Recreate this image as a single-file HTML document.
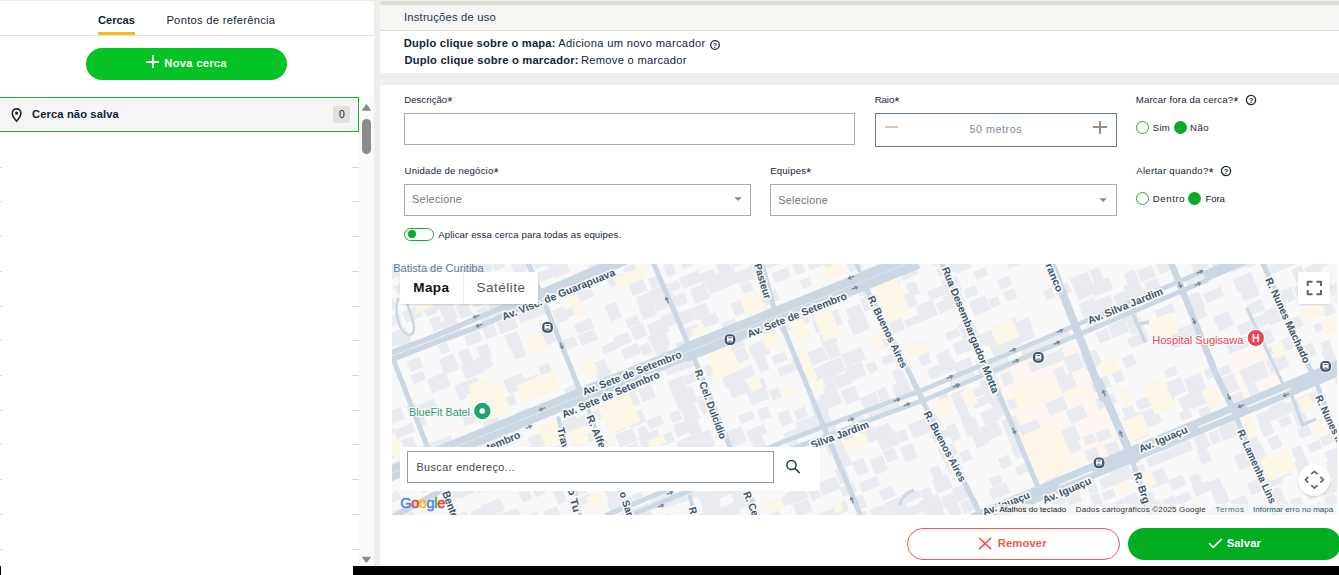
<!DOCTYPE html>
<html><head><meta charset="utf-8"><title>Cercas</title>
<style>
html,body{margin:0;padding:0}
body{width:1339px;height:575px;overflow:hidden;background:#efeeeb;position:relative;font-family:"Liberation Sans",sans-serif}
.abs{position:absolute}
.t{white-space:nowrap}
.box{box-sizing:border-box;border:1px solid #9fadb8;background:#fff}
</style></head><body>
<div class="abs" style="left:0;top:1px;width:374px;height:574px;background:#fff;border-radius:0 3px 0 0"></div>
<span class="abs t" style="left:98.03px;top:14.62px;font-size:11.2px;line-height:11.2px;font-weight:bold;color:#111f33;letter-spacing:-0.091px;">Cercas</span>
<span class="abs t" style="left:166.38px;top:14.62px;font-size:11.2px;line-height:11.2px;color:#13243b;letter-spacing:0.285px;">Pontos de referência</span>
<div class="abs" style="left:98px;top:32px;width:37px;height:3px;background:#fbb917"></div>
<div class="abs" style="left:0;top:35px;width:374px;height:1px;background:#e2e2e2"></div>
<div class="abs" style="left:86px;top:48px;width:201px;height:32px;border-radius:16px;background:#05c325"></div>
<div class="abs" style="left:146px;top:60.5px;width:13px;height:2px;background:#fff"></div>
<div class="abs" style="left:151.5px;top:55px;width:2px;height:13px;background:#fff"></div>
<span class="abs t" style="left:164.33px;top:57.52px;font-size:11.2px;line-height:11.2px;font-weight:bold;color:#fff;letter-spacing:0.275px;">Nova cerca</span>
<div class="abs" style="left:359px;top:96px;width:15px;height:470px;background:#fafafa"></div>
<div class="abs" style="left:0;top:166.70px;width:2px;height:1px;background:#dcd8d2"></div>
<div class="abs" style="left:352px;top:166.70px;width:7px;height:1px;background:#dcd8d2"></div>
<div class="abs" style="left:0;top:201.42px;width:2px;height:1px;background:#dcd8d2"></div>
<div class="abs" style="left:352px;top:201.42px;width:7px;height:1px;background:#dcd8d2"></div>
<div class="abs" style="left:0;top:236.14px;width:2px;height:1px;background:#dcd8d2"></div>
<div class="abs" style="left:352px;top:236.14px;width:7px;height:1px;background:#dcd8d2"></div>
<div class="abs" style="left:0;top:270.86px;width:2px;height:1px;background:#dcd8d2"></div>
<div class="abs" style="left:352px;top:270.86px;width:7px;height:1px;background:#dcd8d2"></div>
<div class="abs" style="left:0;top:305.58px;width:2px;height:1px;background:#dcd8d2"></div>
<div class="abs" style="left:352px;top:305.58px;width:7px;height:1px;background:#dcd8d2"></div>
<div class="abs" style="left:0;top:340.30px;width:2px;height:1px;background:#dcd8d2"></div>
<div class="abs" style="left:352px;top:340.30px;width:7px;height:1px;background:#dcd8d2"></div>
<div class="abs" style="left:0;top:375.02px;width:2px;height:1px;background:#dcd8d2"></div>
<div class="abs" style="left:352px;top:375.02px;width:7px;height:1px;background:#dcd8d2"></div>
<div class="abs" style="left:0;top:409.74px;width:2px;height:1px;background:#dcd8d2"></div>
<div class="abs" style="left:352px;top:409.74px;width:7px;height:1px;background:#dcd8d2"></div>
<div class="abs" style="left:0;top:444.46px;width:2px;height:1px;background:#dcd8d2"></div>
<div class="abs" style="left:352px;top:444.46px;width:7px;height:1px;background:#dcd8d2"></div>
<div class="abs" style="left:0;top:479.18px;width:2px;height:1px;background:#dcd8d2"></div>
<div class="abs" style="left:352px;top:479.18px;width:7px;height:1px;background:#dcd8d2"></div>
<div class="abs" style="left:0;top:513.90px;width:2px;height:1px;background:#dcd8d2"></div>
<div class="abs" style="left:352px;top:513.90px;width:7px;height:1px;background:#dcd8d2"></div>
<div class="abs" style="left:0;top:548.62px;width:2px;height:1px;background:#dcd8d2"></div>
<div class="abs" style="left:352px;top:548.62px;width:7px;height:1px;background:#dcd8d2"></div>
<div class="abs" style="left:-2px;top:97px;width:361px;height:35px;box-sizing:border-box;border:1px solid #14b32b;background:#f5f5f5"></div>
<svg class="abs" style="left:10px;top:106px" width="14" height="18" viewBox="0 0 14 18"><path d="M6.6 2.9c-2.4 0-4.3 1.9-4.3 4.3 0 3.2 4.3 8 4.3 8s4.3-4.8 4.3-8c0-2.4-1.900-4.300-4.300-4.300z" fill="none" stroke="#1a2433" stroke-width="1.6"/><circle cx="6.600" cy="7.100" r="1.6" fill="#1a2433"/></svg>
<span class="abs t" style="left:32.08px;top:109.32px;font-size:11.2px;line-height:11.2px;font-weight:bold;color:#111f33;letter-spacing:0.104px;">Cerca não salva</span>
<div class="abs" style="left:333px;top:106px;width:17px;height:17px;border-radius:2.5px;background:#e1e0db"></div>
<span class="abs t" style="left:338.93px;top:110.10px;font-size:10.4px;line-height:10.4px;color:#13243b;letter-spacing:0.000px;">0</span>
<svg class="abs" style="left:359px;top:100px" width="15" height="14" viewBox="0 0 15 14"><path d="M3.4 10.200 L7.450 4.600 L11.500 10.200 Z" fill="#8a8a8a" stroke="#8a8a8a" stroke-width="1" stroke-linejoin="round"/></svg>
<div class="abs" style="left:362px;top:119px;width:9px;height:35px;border-radius:4.5px;background:#8b8b8b"></div>
<svg class="abs" style="left:359px;top:552px" width="15" height="14" viewBox="0 0 15 14"><path d="M3.4 5.300 L7.45 10.400 L11.500 5.300 Z" fill="#8a8a8a" stroke="#8a8a8a" stroke-width="1" stroke-linejoin="round"/></svg>
<div class="abs" style="left:380px;top:1px;width:970px;height:72px;background:#fff;border-radius:3px 0 0 3px;overflow:hidden"><div style="height:4px;background:#dfddd8"></div><div style="height:25px;background:#f5f5f3"></div><div style="height:1px;background:#dddbd6"></div></div>
<span class="abs t" style="left:404.03px;top:12.42px;font-size:11.2px;line-height:11.2px;color:#1d3352;letter-spacing:0.216px;">Instruções de uso</span>
<span class="abs t" style="left:403.78px;top:37.82px;font-size:11.2px;line-height:11.2px;font-weight:bold;color:#111f33;letter-spacing:0.201px;">Duplo clique sobre o mapa:</span>
<span class="abs t" style="left:558.28px;top:37.82px;font-size:11.2px;line-height:11.2px;color:#13243b;letter-spacing:0.318px;">Adiciona um novo marcador</span>
<span class="abs t" style="left:404.43px;top:54.62px;font-size:11.2px;line-height:11.2px;font-weight:bold;color:#111f33;letter-spacing:0.197px;">Duplo clique sobre o marcador:</span>
<span class="abs t" style="left:580.88px;top:54.62px;font-size:11.2px;line-height:11.2px;color:#13243b;letter-spacing:0.269px;">Remove o marcador</span>
<svg class="abs" style="left:708.00px;top:37.80px" width="14" height="14" viewBox="0 0 14 14"><circle cx="7" cy="7" r="4.30" fill="none" stroke="#1b2a3c" stroke-width="1.3"/><text x="7" y="9.600" font-family='"Liberation Sans", sans-serif' font-size="7.0" font-weight="bold" text-anchor="middle" fill="#1b2a3c">?</text></svg>
<div class="abs" style="left:380px;top:85px;width:970px;height:481px;background:#fff"></div>
<span class="abs t" style="left:404.17px;top:94.87px;font-size:9.6px;line-height:9.6px;color:#13243b;letter-spacing:0.049px;">Descrição<span style="font-size:1.38em;line-height:0;position:relative;top:0.23em">*</span></span>
<div class="abs box" style="left:404px;top:113px;width:451px;height:32px"></div>
<span class="abs t" style="left:874.77px;top:94.97px;font-size:9.6px;line-height:9.6px;color:#13243b;letter-spacing:-0.081px;">Raio<span style="font-size:1.38em;line-height:0;position:relative;top:0.23em">*</span></span>
<div class="abs" style="left:875px;top:113px;width:242px;height:34px;box-sizing:border-box;border:1px solid #647c90;background:#fff"></div>
<div class="abs" style="left:885px;top:126px;width:13.400px;height:2px;background:#cacaca"></div>
<div class="abs" style="left:1093.400px;top:126px;width:13.600px;height:2px;background:#919191"></div>
<div class="abs" style="left:1099.300px;top:120.8px;width:2px;height:13.200px;background:#919191"></div>
<span class="abs t" style="left:969.45px;top:123.56px;font-size:10.8px;line-height:10.8px;color:#7d8897;letter-spacing:0.529px;">50 metros</span>
<span class="abs t" style="left:1135.82px;top:94.77px;font-size:9.6px;line-height:9.6px;color:#13243b;letter-spacing:0.167px;">Marcar fora da cerca?<span style="font-size:1.38em;line-height:0;position:relative;top:0.23em">*</span></span>
<svg class="abs" style="left:1243.60px;top:92.80px" width="14" height="14" viewBox="0 0 14 14"><circle cx="7" cy="7" r="4.60" fill="none" stroke="#1b2a3c" stroke-width="1.3"/><text x="7" y="9.600" font-family='"Liberation Sans", sans-serif' font-size="7.5" font-weight="bold" text-anchor="middle" fill="#1b2a3c">?</text></svg>
<div class="abs" style="left:1135.80px;top:121.30px;width:13px;height:13px;border-radius:50%;box-sizing:border-box;border:1.3px solid #12b02c;background:#fff"></div>
<span class="abs t" style="left:1152.67px;top:122.67px;font-size:9.6px;line-height:9.6px;color:#13243b;letter-spacing:0.340px;">Sim</span>
<div class="abs" style="left:1173.90px;top:121.30px;width:13px;height:13px;border-radius:50%;background:#0bab28"></div>
<span class="abs t" style="left:1190.02px;top:122.67px;font-size:9.6px;line-height:9.6px;color:#13243b;letter-spacing:0.486px;">Não</span>
<span class="abs t" style="left:1136.32px;top:165.77px;font-size:9.6px;line-height:9.6px;color:#13243b;letter-spacing:0.262px;">Alertar quando?<span style="font-size:1.38em;line-height:0;position:relative;top:0.23em">*</span></span>
<svg class="abs" style="left:1218.60px;top:163.90px" width="14" height="14" viewBox="0 0 14 14"><circle cx="7" cy="7" r="4.60" fill="none" stroke="#1b2a3c" stroke-width="1.3"/><text x="7" y="9.600" font-family='"Liberation Sans", sans-serif' font-size="7.5" font-weight="bold" text-anchor="middle" fill="#1b2a3c">?</text></svg>
<div class="abs" style="left:1135.80px;top:191.80px;width:13px;height:13px;border-radius:50%;box-sizing:border-box;border:1.3px solid #12b02c;background:#fff"></div>
<span class="abs t" style="left:1152.82px;top:193.77px;font-size:9.6px;line-height:9.6px;color:#13243b;letter-spacing:0.587px;">Dentro</span>
<div class="abs" style="left:1188.00px;top:191.80px;width:13px;height:13px;border-radius:50%;background:#0bab28"></div>
<span class="abs t" style="left:1205.42px;top:193.77px;font-size:9.6px;line-height:9.6px;color:#13243b;letter-spacing:-0.105px;">Fora</span>
<span class="abs t" style="left:404.62px;top:166.07px;font-size:9.6px;line-height:9.6px;color:#13243b;letter-spacing:0.196px;">Unidade de negócio<span style="font-size:1.38em;line-height:0;position:relative;top:0.23em">*</span></span>
<div class="abs box" style="left:404px;top:184px;width:347px;height:32px"></div>
<span class="abs t" style="left:412.10px;top:193.96px;font-size:10.8px;line-height:10.8px;color:#747474;letter-spacing:0.293px;">Selecione</span>
<svg class="abs" style="left:733px;top:196px" width="10" height="6" viewBox="0 0 10 6"><path d="M1.3 1.2h7.600L5.1 5z" fill="#8a8a8a"/></svg>
<span class="abs t" style="left:770.32px;top:165.77px;font-size:9.6px;line-height:9.6px;color:#13243b;letter-spacing:0.158px;">Equipes<span style="font-size:1.38em;line-height:0;position:relative;top:0.23em">*</span></span>
<div class="abs box" style="left:770px;top:184px;width:347px;height:32px"></div>
<span class="abs t" style="left:778.35px;top:194.86px;font-size:10.8px;line-height:10.8px;color:#747474;letter-spacing:0.247px;">Selecione</span>
<svg class="abs" style="left:1098px;top:197px" width="10" height="6" viewBox="0 0 10 6"><path d="M1.3 1.2h7.600L5.1 5z" fill="#8a8a8a"/></svg>
<div class="abs" style="left:404px;top:228px;width:30px;height:13px;border-radius:7px;box-sizing:border-box;border:1.3px solid #12b02c;background:#fff"></div>
<div class="abs" style="left:408px;top:230.300px;width:8.200px;height:8.200px;border-radius:50%;background:#0bab28"></div>
<span class="abs t" style="left:438.22px;top:229.87px;font-size:9.6px;line-height:9.6px;color:#13243b;letter-spacing:0.118px;">Aplicar essa cerca para todas as equipes.</span>
<div class="abs" style="left:392px;top:264px;width:945px;height:251px;overflow:hidden;background:#f8f8f9"><svg class="abs" style="left:0;top:0" width="945" height="251" viewBox="392 264 945 251" font-family='"Liberation Sans", sans-serif'><rect x="1228.7" y="351.0" width="50.0" height="50.0" fill="#fcf5f1" transform="rotate(-22.4 1253.7 376.0)"/><rect x="1227.0" y="380.0" width="54.0" height="20.0" fill="#fcf5f1" transform="rotate(-22.4 1254.0 390.0)"/><rect x="997.0" y="360.0" width="36.0" height="24.0" fill="#fcf5f1" transform="rotate(-22.4 1015.0 372.0)"/><path d="M995 377 L1080 340 L1126 447 L1039 484 Z" fill="#fcf5f1"/><rect x="378.1" y="517.0" width="17.3" height="10.5" fill="#e9ebf0" transform="rotate(-22.4 386.7 522.2)"/><rect x="379.9" y="462.1" width="11.7" height="13.4" fill="#e9ebf0" transform="rotate(-22.4 385.7 468.8)"/><rect x="385.9" y="492.7" width="14.3" height="9.3" fill="#e9ebf0" transform="rotate(-22.4 393.0 497.3)"/><rect x="392.8" y="507.2" width="20.3" height="11.6" fill="#e9ebf0" transform="rotate(-22.4 402.9 513.0)"/><rect x="384.5" y="429.5" width="13.3" height="14.3" fill="#e9ebf0" transform="rotate(-22.4 391.1 436.7)"/><rect x="387.8" y="444.7" width="9.2" height="14.1" fill="#e9ebf0" transform="rotate(-22.4 392.4 451.8)"/><rect x="391.2" y="460.1" width="18.2" height="15.5" fill="#e9ebf0" transform="rotate(-22.4 400.3 467.9)"/><rect x="388.4" y="409.2" width="15.1" height="12.7" fill="#e9ebf0" transform="rotate(-22.4 396.0 415.5)"/><rect x="396.3" y="426.0" width="18.3" height="9.0" fill="#e9ebf0" transform="rotate(-22.4 405.5 430.5)"/><rect x="403.3" y="437.8" width="12.0" height="14.0" fill="#e9ebf0" transform="rotate(-22.4 409.3 444.8)"/><rect x="405.8" y="451.3" width="17.5" height="14.9" fill="#e9ebf0" transform="rotate(-22.4 414.6 458.8)"/><rect x="412.0" y="468.1" width="20.2" height="13.6" fill="#e9ebf0" transform="rotate(-22.4 422.1 474.9)"/><rect x="421.0" y="483.0" width="12.3" height="8.3" fill="#e9ebf0" transform="rotate(-22.4 427.2 487.1)"/><rect x="380.1" y="334.5" width="17.1" height="13.9" fill="#e9ebf0" transform="rotate(-22.4 388.6 341.5)"/><rect x="386.3" y="348.9" width="14.5" height="11.1" fill="#e9ebf0" transform="rotate(-22.4 393.5 354.4)"/><rect x="407.7" y="403.9" width="10.2" height="10.9" fill="#e9ebf0" transform="rotate(-22.4 412.8 409.4)"/><rect x="416.0" y="417.8" width="9.8" height="8.6" fill="#e9ebf0" transform="rotate(-22.4 421.0 422.1)"/><rect x="421.6" y="443.3" width="18.6" height="16.6" fill="#e9ebf0" transform="rotate(-22.4 430.9 451.6)"/><rect x="431.4" y="459.8" width="14.6" height="16.1" fill="#e9ebf0" transform="rotate(-22.4 438.7 467.8)"/><rect x="445.6" y="486.6" width="10.3" height="13.3" fill="#e9ebf0" transform="rotate(-22.4 450.8 493.2)"/><rect x="449.9" y="514.0" width="19.6" height="14.0" fill="#e9ebf0" transform="rotate(-22.4 459.7 521.0)"/><rect x="379.4" y="286.3" width="11.4" height="9.5" fill="#e9ebf0" transform="rotate(-22.4 385.1 291.0)"/><rect x="384.7" y="300.5" width="10.9" height="10.0" fill="#e9ebf0" transform="rotate(-22.4 390.1 305.5)"/><rect x="386.0" y="315.6" width="15.1" height="9.7" fill="#e9ebf0" transform="rotate(-22.4 393.5 320.4)"/><rect x="394.7" y="329.1" width="14.8" height="16.5" fill="#e9ebf0" transform="rotate(-22.4 402.1 337.4)"/><rect x="400.2" y="344.9" width="10.7" height="9.5" fill="#e9ebf0" transform="rotate(-22.4 405.6 349.7)"/><rect x="408.1" y="358.9" width="13.8" height="11.2" fill="#e9ebf0" transform="rotate(-22.4 415.0 364.5)"/><rect x="411.3" y="372.9" width="13.7" height="9.4" fill="#e9ebf0" transform="rotate(-22.4 418.1 377.6)"/><rect x="419.1" y="401.4" width="17.7" height="11.2" fill="#e9ebf0" transform="rotate(-22.4 428.0 407.0)"/><rect x="438.4" y="437.6" width="15.7" height="14.0" fill="#e9ebf0" transform="rotate(-22.4 446.3 444.6)"/><rect x="455.1" y="482.8" width="18.5" height="13.3" fill="#e9ebf0" transform="rotate(-22.4 464.3 489.4)"/><rect x="471.3" y="509.3" width="13.8" height="9.6" fill="#e9ebf0" transform="rotate(-22.4 478.3 514.2)"/><rect x="379.3" y="253.4" width="19.3" height="16.2" fill="#e9ebf0" transform="rotate(-22.4 388.9 261.5)"/><rect x="384.7" y="264.6" width="13.6" height="14.2" fill="#e9ebf0" transform="rotate(-22.4 391.5 271.7)"/><rect x="394.7" y="283.4" width="15.2" height="8.1" fill="#e9ebf0" transform="rotate(-22.4 402.3 287.4)"/><rect x="403.6" y="308.4" width="17.7" height="11.7" fill="#e9ebf0" transform="rotate(-22.4 412.5 314.3)"/><rect x="428.8" y="375.1" width="19.8" height="15.1" fill="#e9ebf0" transform="rotate(-22.4 438.7 382.6)"/><rect x="461.2" y="446.3" width="16.3" height="9.4" fill="#e9ebf0" transform="rotate(-22.4 469.4 451.1)"/><rect x="474.7" y="475.4" width="10.0" height="16.4" fill="#e9ebf0" transform="rotate(-22.4 479.7 483.6)"/><rect x="483.1" y="501.6" width="19.9" height="13.3" fill="#e9ebf0" transform="rotate(-22.4 493.0 508.2)"/><rect x="489.4" y="514.6" width="18.3" height="8.9" fill="#e9ebf0" transform="rotate(-22.4 498.6 519.0)"/><rect x="409.9" y="275.2" width="13.9" height="9.5" fill="#e9ebf0" transform="rotate(-22.4 416.8 279.9)"/><rect x="415.1" y="288.3" width="12.2" height="11.3" fill="#e9ebf0" transform="rotate(-22.4 421.2 294.0)"/><rect x="423.3" y="299.7" width="10.9" height="16.0" fill="#e9ebf0" transform="rotate(-22.4 428.7 307.7)"/><rect x="431.1" y="316.7" width="10.7" height="13.2" fill="#e9ebf0" transform="rotate(-22.4 436.5 323.3)"/><rect x="439.4" y="343.3" width="9.3" height="9.8" fill="#e9ebf0" transform="rotate(-22.4 444.1 348.3)"/><rect x="441.2" y="356.2" width="15.8" height="16.5" fill="#e9ebf0" transform="rotate(-22.4 449.0 364.5)"/><rect x="456.4" y="382.8" width="15.5" height="15.8" fill="#e9ebf0" transform="rotate(-22.4 464.2 390.7)"/><rect x="462.6" y="412.3" width="20.6" height="10.2" fill="#e9ebf0" transform="rotate(-22.4 472.9 417.4)"/><rect x="475.9" y="441.6" width="11.5" height="12.6" fill="#e9ebf0" transform="rotate(-22.4 481.6 447.9)"/><rect x="483.6" y="452.3" width="17.2" height="16.3" fill="#e9ebf0" transform="rotate(-22.4 492.2 460.5)"/><rect x="499.8" y="511.0" width="20.6" height="10.8" fill="#e9ebf0" transform="rotate(-22.4 510.2 516.4)"/><rect x="414.9" y="250.7" width="17.9" height="14.5" fill="#e9ebf0" transform="rotate(-22.4 423.8 257.9)"/><rect x="422.8" y="268.3" width="14.2" height="14.0" fill="#e9ebf0" transform="rotate(-22.4 429.9 275.3)"/><rect x="432.3" y="278.0" width="11.7" height="11.6" fill="#e9ebf0" transform="rotate(-22.4 438.2 283.8)"/><rect x="430.5" y="297.8" width="20.9" height="11.0" fill="#e9ebf0" transform="rotate(-22.4 440.9 303.3)"/><rect x="441.9" y="306.2" width="13.8" height="14.2" fill="#e9ebf0" transform="rotate(-22.4 448.8 313.3)"/><rect x="443.6" y="319.0" width="15.5" height="16.9" fill="#e9ebf0" transform="rotate(-22.4 451.3 327.5)"/><rect x="460.0" y="349.7" width="11.3" height="14.0" fill="#e9ebf0" transform="rotate(-22.4 465.7 356.7)"/><rect x="462.5" y="361.1" width="20.2" height="15.3" fill="#e9ebf0" transform="rotate(-22.4 472.6 368.8)"/><rect x="469.8" y="378.2" width="10.5" height="14.2" fill="#e9ebf0" transform="rotate(-22.4 475.1 385.3)"/><rect x="481.3" y="401.0" width="17.6" height="15.2" fill="#e9ebf0" transform="rotate(-22.4 490.1 408.7)"/><rect x="484.2" y="416.8" width="16.0" height="14.5" fill="#e9ebf0" transform="rotate(-22.4 492.2 424.1)"/><rect x="492.0" y="433.6" width="17.5" height="10.5" fill="#e9ebf0" transform="rotate(-22.4 500.7 438.8)"/><rect x="498.8" y="458.7" width="17.7" height="15.8" fill="#e9ebf0" transform="rotate(-22.4 507.7 466.6)"/><rect x="520.2" y="490.1" width="10.4" height="11.4" fill="#e9ebf0" transform="rotate(-22.4 525.4 495.8)"/><rect x="521.6" y="515.0" width="19.5" height="17.0" fill="#e9ebf0" transform="rotate(-22.4 531.4 523.4)"/><rect x="437.1" y="249.7" width="14.1" height="9.7" fill="#e9ebf0" transform="rotate(-22.4 444.2 254.6)"/><rect x="444.5" y="278.3" width="14.3" height="11.6" fill="#e9ebf0" transform="rotate(-22.4 451.6 284.1)"/><rect x="449.2" y="287.0" width="13.7" height="11.4" fill="#e9ebf0" transform="rotate(-22.4 456.1 292.7)"/><rect x="457.6" y="303.4" width="13.0" height="14.1" fill="#e9ebf0" transform="rotate(-22.4 464.1 310.5)"/><rect x="465.2" y="333.2" width="16.3" height="10.6" fill="#e9ebf0" transform="rotate(-22.4 473.4 338.5)"/><rect x="478.4" y="345.1" width="11.8" height="13.3" fill="#e9ebf0" transform="rotate(-22.4 484.3 351.8)"/><rect x="478.6" y="355.1" width="12.9" height="13.8" fill="#e9ebf0" transform="rotate(-22.4 485.1 362.0)"/><rect x="489.4" y="385.3" width="12.7" height="11.7" fill="#e9ebf0" transform="rotate(-22.4 495.8 391.2)"/><rect x="495.2" y="397.7" width="20.8" height="10.2" fill="#e9ebf0" transform="rotate(-22.4 505.6 402.7)"/><rect x="511.2" y="425.1" width="9.5" height="15.2" fill="#e9ebf0" transform="rotate(-22.4 515.9 432.6)"/><rect x="518.2" y="456.3" width="20.8" height="8.5" fill="#e9ebf0" transform="rotate(-22.4 528.6 460.5)"/><rect x="522.4" y="468.7" width="18.3" height="15.6" fill="#e9ebf0" transform="rotate(-22.4 531.6 476.4)"/><rect x="533.5" y="485.7" width="10.3" height="10.3" fill="#e9ebf0" transform="rotate(-22.4 538.6 490.9)"/><rect x="544.5" y="508.4" width="14.5" height="9.9" fill="#e9ebf0" transform="rotate(-22.4 551.8 513.3)"/><rect x="460.2" y="265.6" width="18.9" height="12.7" fill="#e9ebf0" transform="rotate(-22.4 469.7 271.9)"/><rect x="466.8" y="280.0" width="19.0" height="14.2" fill="#e9ebf0" transform="rotate(-22.4 476.3 287.1)"/><rect x="471.4" y="294.2" width="19.8" height="11.0" fill="#e9ebf0" transform="rotate(-22.4 481.3 299.8)"/><rect x="478.8" y="307.3" width="9.9" height="13.6" fill="#e9ebf0" transform="rotate(-22.4 483.8 314.1)"/><rect x="482.8" y="321.5" width="12.3" height="16.3" fill="#e9ebf0" transform="rotate(-22.4 489.0 329.6)"/><rect x="505.3" y="375.9" width="20.1" height="15.3" fill="#e9ebf0" transform="rotate(-22.4 515.4 383.5)"/><rect x="516.6" y="409.7" width="15.6" height="13.5" fill="#e9ebf0" transform="rotate(-22.4 524.4 416.5)"/><rect x="528.9" y="434.2" width="18.4" height="12.1" fill="#e9ebf0" transform="rotate(-22.4 538.1 440.3)"/><rect x="535.9" y="444.8" width="17.9" height="15.5" fill="#e9ebf0" transform="rotate(-22.4 544.9 452.5)"/><rect x="543.5" y="462.7" width="11.7" height="10.0" fill="#e9ebf0" transform="rotate(-22.4 549.4 467.6)"/><rect x="555.4" y="489.0" width="9.3" height="14.8" fill="#e9ebf0" transform="rotate(-22.4 560.0 496.4)"/><rect x="475.4" y="249.7" width="10.4" height="10.0" fill="#e9ebf0" transform="rotate(-22.4 480.6 254.7)"/><rect x="473.7" y="258.7" width="17.4" height="15.0" fill="#e9ebf0" transform="rotate(-22.4 482.4 266.2)"/><rect x="486.7" y="290.0" width="13.9" height="16.4" fill="#e9ebf0" transform="rotate(-22.4 493.7 298.2)"/><rect x="489.2" y="301.4" width="20.4" height="12.6" fill="#e9ebf0" transform="rotate(-22.4 499.4 307.7)"/><rect x="497.9" y="319.0" width="19.0" height="12.3" fill="#e9ebf0" transform="rotate(-22.4 507.4 325.1)"/><rect x="506.2" y="332.8" width="13.9" height="13.9" fill="#e9ebf0" transform="rotate(-22.4 513.2 339.7)"/><rect x="512.5" y="345.2" width="11.9" height="13.0" fill="#e9ebf0" transform="rotate(-22.4 518.5 351.7)"/><rect x="519.7" y="377.3" width="20.7" height="8.1" fill="#e9ebf0" transform="rotate(-22.4 530.1 381.4)"/><rect x="541.5" y="426.9" width="17.6" height="14.6" fill="#e9ebf0" transform="rotate(-22.4 550.3 434.2)"/><rect x="551.2" y="444.7" width="16.9" height="8.2" fill="#e9ebf0" transform="rotate(-22.4 559.7 448.8)"/><rect x="557.0" y="458.5" width="13.0" height="9.2" fill="#e9ebf0" transform="rotate(-22.4 563.5 463.1)"/><rect x="569.1" y="480.5" width="15.6" height="15.3" fill="#e9ebf0" transform="rotate(-22.4 576.9 488.2)"/><rect x="571.6" y="496.7" width="20.2" height="8.2" fill="#e9ebf0" transform="rotate(-22.4 581.7 500.9)"/><rect x="492.9" y="259.3" width="11.1" height="10.3" fill="#e9ebf0" transform="rotate(-22.4 498.5 264.5)"/><rect x="506.6" y="283.6" width="10.2" height="13.9" fill="#e9ebf0" transform="rotate(-22.4 511.7 290.5)"/><rect x="508.7" y="299.8" width="17.2" height="8.4" fill="#e9ebf0" transform="rotate(-22.4 517.3 304.0)"/><rect x="518.1" y="309.7" width="14.1" height="11.4" fill="#e9ebf0" transform="rotate(-22.4 525.1 315.4)"/><rect x="540.5" y="364.1" width="11.3" height="16.5" fill="#e9ebf0" transform="rotate(-22.4 546.1 372.4)"/><rect x="560.9" y="418.5" width="17.9" height="14.4" fill="#e9ebf0" transform="rotate(-22.4 569.8 425.7)"/><rect x="586.6" y="477.0" width="12.7" height="11.3" fill="#e9ebf0" transform="rotate(-22.4 592.9 482.6)"/><rect x="512.6" y="260.5" width="14.8" height="11.7" fill="#e9ebf0" transform="rotate(-22.4 520.0 266.4)"/><rect x="527.4" y="292.3" width="16.0" height="10.1" fill="#e9ebf0" transform="rotate(-22.4 535.4 297.4)"/><rect x="529.9" y="303.7" width="16.7" height="12.5" fill="#e9ebf0" transform="rotate(-22.4 538.2 310.0)"/><rect x="540.3" y="321.4" width="11.4" height="11.0" fill="#e9ebf0" transform="rotate(-22.4 546.0 326.9)"/><rect x="539.7" y="329.0" width="14.1" height="15.5" fill="#e9ebf0" transform="rotate(-22.4 546.7 336.7)"/><rect x="565.4" y="385.7" width="13.6" height="10.4" fill="#e9ebf0" transform="rotate(-22.4 572.2 390.9)"/><rect x="576.8" y="414.9" width="14.9" height="11.6" fill="#e9ebf0" transform="rotate(-22.4 584.2 420.7)"/><rect x="583.9" y="432.0" width="16.2" height="9.0" fill="#e9ebf0" transform="rotate(-22.4 591.9 436.5)"/><rect x="589.8" y="446.9" width="18.1" height="8.4" fill="#e9ebf0" transform="rotate(-22.4 598.9 451.1)"/><rect x="606.0" y="486.6" width="19.7" height="10.2" fill="#e9ebf0" transform="rotate(-22.4 615.9 491.7)"/><rect x="608.4" y="497.1" width="18.1" height="13.5" fill="#e9ebf0" transform="rotate(-22.4 617.4 503.8)"/><rect x="617.6" y="512.7" width="15.8" height="16.2" fill="#e9ebf0" transform="rotate(-22.4 625.5 520.8)"/><rect x="532.9" y="258.8" width="12.7" height="8.9" fill="#e9ebf0" transform="rotate(-22.4 539.3 263.3)"/><rect x="534.9" y="270.8" width="18.8" height="9.4" fill="#e9ebf0" transform="rotate(-22.4 544.3 275.5)"/><rect x="543.1" y="288.3" width="10.9" height="8.7" fill="#e9ebf0" transform="rotate(-22.4 548.6 292.6)"/><rect x="554.0" y="308.2" width="12.0" height="14.0" fill="#e9ebf0" transform="rotate(-22.4 559.9 315.2)"/><rect x="563.5" y="338.1" width="13.1" height="10.2" fill="#e9ebf0" transform="rotate(-22.4 570.0 343.2)"/><rect x="587.7" y="393.3" width="13.6" height="10.6" fill="#e9ebf0" transform="rotate(-22.4 594.5 398.6)"/><rect x="594.2" y="407.6" width="12.9" height="10.5" fill="#e9ebf0" transform="rotate(-22.4 600.7 412.9)"/><rect x="607.3" y="453.2" width="20.3" height="12.0" fill="#e9ebf0" transform="rotate(-22.4 617.4 459.2)"/><rect x="618.2" y="463.8" width="12.1" height="8.9" fill="#e9ebf0" transform="rotate(-22.4 624.3 468.3)"/><rect x="622.2" y="473.4" width="14.2" height="16.9" fill="#e9ebf0" transform="rotate(-22.4 629.3 481.8)"/><rect x="624.5" y="494.7" width="19.7" height="11.4" fill="#e9ebf0" transform="rotate(-22.4 634.4 500.4)"/><rect x="631.3" y="506.1" width="20.1" height="13.9" fill="#e9ebf0" transform="rotate(-22.4 641.3 513.1)"/><rect x="638.1" y="518.6" width="14.4" height="12.2" fill="#e9ebf0" transform="rotate(-22.4 645.3 524.7)"/><rect x="544.6" y="251.2" width="14.4" height="14.4" fill="#e9ebf0" transform="rotate(-22.4 551.8 258.5)"/><rect x="552.0" y="263.9" width="16.8" height="11.5" fill="#e9ebf0" transform="rotate(-22.4 560.5 269.7)"/><rect x="555.1" y="280.6" width="17.1" height="12.8" fill="#e9ebf0" transform="rotate(-22.4 563.6 287.0)"/><rect x="564.6" y="306.3" width="19.1" height="8.1" fill="#e9ebf0" transform="rotate(-22.4 574.2 310.3)"/><rect x="575.3" y="320.7" width="17.6" height="10.7" fill="#e9ebf0" transform="rotate(-22.4 584.1 326.0)"/><rect x="579.0" y="332.0" width="17.7" height="11.1" fill="#e9ebf0" transform="rotate(-22.4 587.8 337.6)"/><rect x="594.6" y="360.5" width="13.5" height="16.9" fill="#e9ebf0" transform="rotate(-22.4 601.4 368.9)"/><rect x="597.5" y="371.6" width="15.5" height="11.5" fill="#e9ebf0" transform="rotate(-22.4 605.3 377.3)"/><rect x="606.9" y="403.4" width="15.6" height="14.8" fill="#e9ebf0" transform="rotate(-22.4 614.7 410.8)"/><rect x="613.7" y="418.8" width="11.6" height="12.2" fill="#e9ebf0" transform="rotate(-22.4 619.5 425.0)"/><rect x="617.1" y="430.9" width="18.2" height="13.7" fill="#e9ebf0" transform="rotate(-22.4 626.2 437.7)"/><rect x="628.8" y="444.1" width="11.5" height="12.8" fill="#e9ebf0" transform="rotate(-22.4 634.5 450.5)"/><rect x="632.8" y="456.3" width="12.7" height="11.1" fill="#e9ebf0" transform="rotate(-22.4 639.1 461.8)"/><rect x="636.0" y="474.7" width="15.9" height="9.6" fill="#e9ebf0" transform="rotate(-22.4 644.0 479.5)"/><rect x="651.2" y="497.9" width="10.2" height="10.3" fill="#e9ebf0" transform="rotate(-22.4 656.3 503.1)"/><rect x="650.9" y="516.8" width="20.3" height="10.6" fill="#e9ebf0" transform="rotate(-22.4 661.0 522.1)"/><rect x="573.5" y="271.3" width="15.5" height="8.2" fill="#e9ebf0" transform="rotate(-22.4 581.2 275.4)"/><rect x="575.6" y="288.1" width="17.1" height="11.8" fill="#e9ebf0" transform="rotate(-22.4 584.2 294.1)"/><rect x="602.1" y="343.3" width="16.3" height="8.1" fill="#e9ebf0" transform="rotate(-22.4 610.2 347.4)"/><rect x="615.1" y="371.7" width="12.3" height="8.3" fill="#e9ebf0" transform="rotate(-22.4 621.2 375.8)"/><rect x="617.6" y="393.7" width="20.9" height="14.7" fill="#e9ebf0" transform="rotate(-22.4 628.0 401.1)"/><rect x="627.6" y="412.3" width="17.0" height="13.2" fill="#e9ebf0" transform="rotate(-22.4 636.1 418.9)"/><rect x="638.9" y="426.6" width="9.0" height="11.8" fill="#e9ebf0" transform="rotate(-22.4 643.4 432.5)"/><rect x="640.2" y="432.5" width="20.4" height="15.6" fill="#e9ebf0" transform="rotate(-22.4 650.4 440.3)"/><rect x="653.6" y="466.2" width="14.9" height="9.3" fill="#e9ebf0" transform="rotate(-22.4 661.1 470.9)"/><rect x="656.8" y="476.6" width="19.5" height="11.8" fill="#e9ebf0" transform="rotate(-22.4 666.5 482.5)"/><rect x="661.5" y="492.9" width="16.8" height="13.1" fill="#e9ebf0" transform="rotate(-22.4 669.9 499.5)"/><rect x="590.4" y="263.0" width="14.7" height="16.0" fill="#e9ebf0" transform="rotate(-22.4 597.8 271.0)"/><rect x="607.1" y="303.5" width="12.0" height="16.4" fill="#e9ebf0" transform="rotate(-22.4 613.1 311.7)"/><rect x="614.5" y="334.4" width="15.9" height="10.9" fill="#e9ebf0" transform="rotate(-22.4 622.4 339.8)"/><rect x="622.2" y="346.0" width="17.6" height="11.0" fill="#e9ebf0" transform="rotate(-22.4 631.0 351.5)"/><rect x="639.9" y="386.4" width="13.9" height="13.6" fill="#e9ebf0" transform="rotate(-22.4 646.8 393.2)"/><rect x="647.3" y="417.5" width="15.7" height="9.5" fill="#e9ebf0" transform="rotate(-22.4 655.1 422.3)"/><rect x="658.3" y="434.0" width="15.2" height="10.3" fill="#e9ebf0" transform="rotate(-22.4 665.9 439.1)"/><rect x="664.0" y="447.9" width="10.9" height="10.4" fill="#e9ebf0" transform="rotate(-22.4 669.4 453.1)"/><rect x="671.6" y="457.5" width="11.3" height="9.2" fill="#e9ebf0" transform="rotate(-22.4 677.2 462.1)"/><rect x="671.2" y="472.8" width="18.1" height="11.6" fill="#e9ebf0" transform="rotate(-22.4 680.3 478.6)"/><rect x="677.3" y="488.5" width="19.8" height="11.8" fill="#e9ebf0" transform="rotate(-22.4 687.2 494.4)"/><rect x="692.7" y="513.7" width="17.2" height="11.4" fill="#e9ebf0" transform="rotate(-22.4 701.3 519.4)"/><rect x="608.1" y="276.1" width="17.3" height="9.0" fill="#e9ebf0" transform="rotate(-22.4 616.8 280.6)"/><rect x="626.3" y="316.8" width="12.8" height="9.2" fill="#e9ebf0" transform="rotate(-22.4 632.7 321.4)"/><rect x="631.8" y="325.3" width="13.6" height="13.0" fill="#e9ebf0" transform="rotate(-22.4 638.6 331.8)"/><rect x="640.8" y="343.9" width="10.1" height="11.0" fill="#e9ebf0" transform="rotate(-22.4 645.9 349.4)"/><rect x="670.8" y="411.4" width="10.4" height="10.3" fill="#e9ebf0" transform="rotate(-22.4 676.0 416.6)"/><rect x="674.7" y="422.4" width="13.9" height="12.8" fill="#e9ebf0" transform="rotate(-22.4 681.7 428.8)"/><rect x="678.3" y="437.8" width="18.6" height="15.9" fill="#e9ebf0" transform="rotate(-22.4 687.5 445.7)"/><rect x="681.4" y="455.0" width="17.3" height="11.3" fill="#e9ebf0" transform="rotate(-22.4 690.1 460.7)"/><rect x="688.7" y="467.3" width="14.5" height="15.3" fill="#e9ebf0" transform="rotate(-22.4 696.0 474.9)"/><rect x="692.9" y="478.7" width="17.9" height="15.9" fill="#e9ebf0" transform="rotate(-22.4 701.9 486.6)"/><rect x="699.8" y="491.6" width="19.3" height="14.8" fill="#e9ebf0" transform="rotate(-22.4 709.4 499.1)"/><rect x="703.2" y="505.4" width="19.6" height="15.2" fill="#e9ebf0" transform="rotate(-22.4 713.0 513.0)"/><rect x="624.1" y="265.4" width="12.3" height="8.5" fill="#e9ebf0" transform="rotate(-22.4 630.2 269.7)"/><rect x="630.0" y="280.3" width="15.7" height="13.4" fill="#e9ebf0" transform="rotate(-22.4 637.8 287.0)"/><rect x="637.2" y="293.8" width="17.6" height="12.2" fill="#e9ebf0" transform="rotate(-22.4 646.0 299.9)"/><rect x="640.5" y="304.4" width="14.6" height="13.5" fill="#e9ebf0" transform="rotate(-22.4 647.7 311.2)"/><rect x="648.9" y="320.7" width="19.2" height="15.3" fill="#e9ebf0" transform="rotate(-22.4 658.6 328.4)"/><rect x="650.2" y="332.0" width="17.9" height="16.9" fill="#e9ebf0" transform="rotate(-22.4 659.1 340.5)"/><rect x="657.5" y="348.5" width="13.2" height="13.4" fill="#e9ebf0" transform="rotate(-22.4 664.1 355.2)"/><rect x="664.4" y="361.6" width="19.9" height="11.0" fill="#e9ebf0" transform="rotate(-22.4 674.4 367.1)"/><rect x="669.8" y="378.2" width="16.1" height="15.4" fill="#e9ebf0" transform="rotate(-22.4 677.8 385.9)"/><rect x="674.7" y="389.5" width="20.8" height="16.4" fill="#e9ebf0" transform="rotate(-22.4 685.1 397.7)"/><rect x="682.7" y="405.1" width="15.4" height="16.6" fill="#e9ebf0" transform="rotate(-22.4 690.4 413.4)"/><rect x="688.0" y="421.3" width="12.2" height="13.0" fill="#e9ebf0" transform="rotate(-22.4 694.1 427.8)"/><rect x="692.7" y="432.4" width="20.4" height="15.9" fill="#e9ebf0" transform="rotate(-22.4 702.9 440.3)"/><rect x="700.8" y="440.3" width="14.0" height="16.5" fill="#e9ebf0" transform="rotate(-22.4 707.8 448.5)"/><rect x="706.4" y="459.4" width="11.8" height="14.4" fill="#e9ebf0" transform="rotate(-22.4 712.3 466.6)"/><rect x="717.0" y="484.7" width="17.4" height="11.1" fill="#e9ebf0" transform="rotate(-22.4 725.6 490.2)"/><rect x="719.5" y="505.1" width="18.6" height="12.1" fill="#e9ebf0" transform="rotate(-22.4 728.8 511.1)"/><rect x="649.6" y="276.7" width="9.8" height="10.8" fill="#e9ebf0" transform="rotate(-22.4 654.5 282.1)"/><rect x="651.6" y="286.1" width="20.2" height="14.0" fill="#e9ebf0" transform="rotate(-22.4 661.6 293.1)"/><rect x="655.2" y="301.1" width="14.2" height="8.2" fill="#e9ebf0" transform="rotate(-22.4 662.3 305.2)"/><rect x="661.8" y="312.8" width="19.3" height="11.7" fill="#e9ebf0" transform="rotate(-22.4 671.5 318.7)"/><rect x="677.5" y="340.8" width="12.2" height="15.0" fill="#e9ebf0" transform="rotate(-22.4 683.6 348.4)"/><rect x="677.0" y="355.6" width="19.6" height="12.5" fill="#e9ebf0" transform="rotate(-22.4 686.8 361.8)"/><rect x="684.1" y="372.7" width="18.7" height="9.0" fill="#e9ebf0" transform="rotate(-22.4 693.4 377.2)"/><rect x="698.5" y="394.9" width="14.3" height="16.9" fill="#e9ebf0" transform="rotate(-22.4 705.7 403.4)"/><rect x="723.9" y="469.3" width="17.1" height="13.7" fill="#e9ebf0" transform="rotate(-22.4 732.5 476.1)"/><rect x="732.0" y="485.9" width="15.4" height="8.2" fill="#e9ebf0" transform="rotate(-22.4 739.7 489.9)"/><rect x="733.5" y="490.8" width="20.7" height="16.1" fill="#e9ebf0" transform="rotate(-22.4 743.9 498.9)"/><rect x="662.3" y="254.7" width="10.5" height="9.0" fill="#e9ebf0" transform="rotate(-22.4 667.6 259.2)"/><rect x="665.4" y="263.9" width="9.2" height="12.4" fill="#e9ebf0" transform="rotate(-22.4 670.0 270.2)"/><rect x="668.4" y="282.3" width="11.5" height="8.0" fill="#e9ebf0" transform="rotate(-22.4 674.1 286.3)"/><rect x="672.6" y="294.3" width="14.0" height="11.2" fill="#e9ebf0" transform="rotate(-22.4 679.6 299.9)"/><rect x="676.3" y="310.9" width="17.9" height="12.4" fill="#e9ebf0" transform="rotate(-22.4 685.2 317.2)"/><rect x="685.0" y="326.0" width="14.5" height="9.8" fill="#e9ebf0" transform="rotate(-22.4 692.3 330.9)"/><rect x="704.9" y="364.6" width="10.4" height="10.9" fill="#e9ebf0" transform="rotate(-22.4 710.1 370.0)"/><rect x="725.6" y="429.4" width="19.1" height="15.8" fill="#e9ebf0" transform="rotate(-22.4 735.1 437.3)"/><rect x="744.2" y="459.4" width="13.2" height="9.8" fill="#e9ebf0" transform="rotate(-22.4 750.8 464.3)"/><rect x="766.8" y="512.8" width="15.9" height="14.1" fill="#e9ebf0" transform="rotate(-22.4 774.7 519.9)"/><rect x="680.9" y="257.7" width="10.6" height="9.9" fill="#e9ebf0" transform="rotate(-22.4 686.2 262.7)"/><rect x="680.3" y="273.6" width="20.6" height="12.0" fill="#e9ebf0" transform="rotate(-22.4 690.6 279.6)"/><rect x="692.0" y="285.8" width="16.1" height="15.5" fill="#e9ebf0" transform="rotate(-22.4 700.0 293.6)"/><rect x="693.6" y="304.7" width="15.4" height="13.2" fill="#e9ebf0" transform="rotate(-22.4 701.3 311.3)"/><rect x="701.3" y="315.0" width="16.7" height="10.6" fill="#e9ebf0" transform="rotate(-22.4 709.6 320.3)"/><rect x="713.8" y="346.8" width="11.7" height="10.4" fill="#e9ebf0" transform="rotate(-22.4 719.7 352.0)"/><rect x="721.7" y="352.4" width="11.5" height="15.2" fill="#e9ebf0" transform="rotate(-22.4 727.5 359.9)"/><rect x="722.8" y="371.2" width="17.6" height="15.1" fill="#e9ebf0" transform="rotate(-22.4 731.6 378.8)"/><rect x="729.6" y="383.1" width="18.8" height="12.2" fill="#e9ebf0" transform="rotate(-22.4 739.0 389.2)"/><rect x="739.0" y="413.0" width="15.0" height="8.4" fill="#e9ebf0" transform="rotate(-22.4 746.4 417.3)"/><rect x="746.9" y="427.4" width="19.4" height="9.4" fill="#e9ebf0" transform="rotate(-22.4 756.5 432.1)"/><rect x="752.9" y="436.1" width="12.2" height="16.3" fill="#e9ebf0" transform="rotate(-22.4 758.9 444.3)"/><rect x="762.7" y="469.2" width="20.4" height="13.4" fill="#e9ebf0" transform="rotate(-22.4 772.9 475.9)"/><rect x="772.5" y="480.7" width="11.9" height="9.2" fill="#e9ebf0" transform="rotate(-22.4 778.5 485.3)"/><rect x="775.9" y="496.8" width="14.6" height="9.3" fill="#e9ebf0" transform="rotate(-22.4 783.2 501.4)"/><rect x="699.4" y="271.3" width="16.0" height="10.1" fill="#e9ebf0" transform="rotate(-22.4 707.4 276.4)"/><rect x="707.4" y="279.2" width="14.2" height="13.2" fill="#e9ebf0" transform="rotate(-22.4 714.5 285.8)"/><rect x="722.7" y="320.6" width="14.7" height="14.4" fill="#e9ebf0" transform="rotate(-22.4 730.1 327.8)"/><rect x="727.2" y="334.1" width="16.2" height="15.4" fill="#e9ebf0" transform="rotate(-22.4 735.3 341.8)"/><rect x="735.6" y="348.9" width="12.1" height="12.6" fill="#e9ebf0" transform="rotate(-22.4 741.7 355.2)"/><rect x="738.7" y="367.1" width="15.0" height="11.2" fill="#e9ebf0" transform="rotate(-22.4 746.2 372.7)"/><rect x="745.5" y="380.8" width="20.3" height="10.2" fill="#e9ebf0" transform="rotate(-22.4 755.7 385.9)"/><rect x="748.6" y="388.3" width="19.3" height="14.1" fill="#e9ebf0" transform="rotate(-22.4 758.2 395.4)"/><rect x="758.9" y="407.7" width="10.9" height="11.3" fill="#e9ebf0" transform="rotate(-22.4 764.4 413.3)"/><rect x="772.6" y="449.0" width="12.1" height="8.3" fill="#e9ebf0" transform="rotate(-22.4 778.6 453.1)"/><rect x="785.3" y="474.7" width="20.0" height="12.2" fill="#e9ebf0" transform="rotate(-22.4 795.4 480.8)"/><rect x="787.2" y="489.5" width="20.2" height="12.4" fill="#e9ebf0" transform="rotate(-22.4 797.3 495.7)"/><rect x="794.6" y="501.6" width="16.5" height="12.6" fill="#e9ebf0" transform="rotate(-22.4 802.8 507.9)"/><rect x="808.0" y="519.5" width="10.0" height="8.3" fill="#e9ebf0" transform="rotate(-22.4 813.0 523.6)"/><rect x="717.2" y="260.0" width="13.6" height="13.0" fill="#e9ebf0" transform="rotate(-22.4 724.0 266.5)"/><rect x="716.2" y="270.6" width="20.9" height="16.2" fill="#e9ebf0" transform="rotate(-22.4 726.7 278.7)"/><rect x="732.2" y="299.7" width="18.7" height="13.9" fill="#e9ebf0" transform="rotate(-22.4 741.5 306.6)"/><rect x="750.1" y="341.9" width="18.1" height="15.6" fill="#e9ebf0" transform="rotate(-22.4 759.1 349.7)"/><rect x="757.1" y="355.6" width="9.9" height="15.9" fill="#e9ebf0" transform="rotate(-22.4 762.1 363.5)"/><rect x="770.5" y="388.2" width="9.8" height="11.2" fill="#e9ebf0" transform="rotate(-22.4 775.4 393.8)"/><rect x="779.3" y="411.2" width="11.7" height="14.0" fill="#e9ebf0" transform="rotate(-22.4 785.2 418.2)"/><rect x="784.5" y="429.4" width="20.6" height="10.5" fill="#e9ebf0" transform="rotate(-22.4 794.8 434.7)"/><rect x="789.7" y="441.2" width="9.9" height="12.5" fill="#e9ebf0" transform="rotate(-22.4 794.6 447.4)"/><rect x="809.2" y="484.0" width="9.6" height="15.6" fill="#e9ebf0" transform="rotate(-22.4 814.1 491.8)"/><rect x="821.7" y="510.5" width="13.7" height="11.8" fill="#e9ebf0" transform="rotate(-22.4 828.6 516.4)"/><rect x="730.6" y="254.3" width="17.5" height="10.6" fill="#e9ebf0" transform="rotate(-22.4 739.3 259.7)"/><rect x="736.7" y="269.6" width="16.8" height="11.9" fill="#e9ebf0" transform="rotate(-22.4 745.1 275.5)"/><rect x="741.4" y="282.4" width="11.2" height="9.7" fill="#e9ebf0" transform="rotate(-22.4 747.0 287.2)"/><rect x="757.1" y="308.8" width="11.9" height="9.6" fill="#e9ebf0" transform="rotate(-22.4 763.1 313.6)"/><rect x="762.3" y="322.2" width="12.0" height="15.3" fill="#e9ebf0" transform="rotate(-22.4 768.3 329.9)"/><rect x="772.4" y="353.8" width="14.3" height="8.8" fill="#e9ebf0" transform="rotate(-22.4 779.5 358.2)"/><rect x="778.2" y="365.4" width="16.7" height="8.8" fill="#e9ebf0" transform="rotate(-22.4 786.5 369.8)"/><rect x="794.8" y="408.5" width="12.0" height="9.9" fill="#e9ebf0" transform="rotate(-22.4 800.8 413.4)"/><rect x="798.0" y="418.2" width="20.5" height="16.7" fill="#e9ebf0" transform="rotate(-22.4 808.2 426.6)"/><rect x="819.3" y="479.1" width="19.5" height="13.5" fill="#e9ebf0" transform="rotate(-22.4 829.1 485.9)"/><rect x="832.4" y="503.1" width="15.6" height="10.5" fill="#e9ebf0" transform="rotate(-22.4 840.2 508.4)"/><rect x="839.6" y="518.3" width="19.5" height="10.6" fill="#e9ebf0" transform="rotate(-22.4 849.4 523.6)"/><rect x="749.3" y="261.4" width="19.1" height="8.8" fill="#e9ebf0" transform="rotate(-22.4 758.9 265.8)"/><rect x="761.4" y="292.1" width="17.1" height="11.7" fill="#e9ebf0" transform="rotate(-22.4 770.0 297.9)"/><rect x="770.9" y="305.5" width="15.1" height="12.9" fill="#e9ebf0" transform="rotate(-22.4 778.5 311.9)"/><rect x="777.6" y="317.5" width="10.3" height="14.2" fill="#e9ebf0" transform="rotate(-22.4 782.8 324.7)"/><rect x="793.2" y="356.7" width="10.1" height="12.9" fill="#e9ebf0" transform="rotate(-22.4 798.3 363.1)"/><rect x="811.9" y="399.9" width="14.8" height="15.7" fill="#e9ebf0" transform="rotate(-22.4 819.3 407.7)"/><rect x="813.1" y="414.9" width="17.7" height="12.0" fill="#e9ebf0" transform="rotate(-22.4 822.0 420.9)"/><rect x="823.4" y="427.9" width="14.0" height="10.0" fill="#e9ebf0" transform="rotate(-22.4 830.4 432.9)"/><rect x="826.7" y="440.7" width="16.9" height="12.4" fill="#e9ebf0" transform="rotate(-22.4 835.1 447.0)"/><rect x="834.3" y="451.5" width="15.5" height="16.6" fill="#e9ebf0" transform="rotate(-22.4 842.1 459.8)"/><rect x="837.2" y="467.5" width="10.8" height="15.7" fill="#e9ebf0" transform="rotate(-22.4 842.7 475.3)"/><rect x="840.8" y="484.8" width="15.1" height="9.6" fill="#e9ebf0" transform="rotate(-22.4 848.4 489.6)"/><rect x="853.4" y="495.8" width="11.8" height="13.4" fill="#e9ebf0" transform="rotate(-22.4 859.3 502.4)"/><rect x="858.3" y="511.9" width="10.1" height="12.9" fill="#e9ebf0" transform="rotate(-22.4 863.3 518.3)"/><rect x="764.8" y="251.8" width="20.2" height="13.7" fill="#e9ebf0" transform="rotate(-22.4 774.9 258.6)"/><rect x="773.0" y="269.9" width="17.0" height="10.6" fill="#e9ebf0" transform="rotate(-22.4 781.5 275.2)"/><rect x="794.9" y="311.1" width="12.7" height="14.4" fill="#e9ebf0" transform="rotate(-22.4 801.2 318.3)"/><rect x="807.7" y="349.3" width="18.6" height="14.2" fill="#e9ebf0" transform="rotate(-22.4 817.0 356.4)"/><rect x="813.9" y="364.8" width="20.9" height="16.6" fill="#e9ebf0" transform="rotate(-22.4 824.4 373.2)"/><rect x="822.0" y="380.4" width="13.8" height="12.5" fill="#e9ebf0" transform="rotate(-22.4 828.9 386.7)"/><rect x="821.2" y="391.6" width="19.1" height="15.6" fill="#e9ebf0" transform="rotate(-22.4 830.8 399.4)"/><rect x="846.3" y="436.5" width="9.1" height="12.0" fill="#e9ebf0" transform="rotate(-22.4 850.8 442.5)"/><rect x="854.3" y="459.5" width="12.1" height="15.4" fill="#e9ebf0" transform="rotate(-22.4 860.3 467.2)"/><rect x="859.8" y="479.1" width="19.4" height="10.3" fill="#e9ebf0" transform="rotate(-22.4 869.5 484.3)"/><rect x="871.6" y="506.6" width="15.5" height="14.1" fill="#e9ebf0" transform="rotate(-22.4 879.4 513.7)"/><rect x="875.9" y="517.1" width="10.3" height="15.4" fill="#e9ebf0" transform="rotate(-22.4 881.0 524.8)"/><rect x="793.2" y="257.5" width="9.6" height="16.6" fill="#e9ebf0" transform="rotate(-22.4 798.0 265.8)"/><rect x="801.0" y="278.7" width="9.6" height="8.8" fill="#e9ebf0" transform="rotate(-22.4 805.8 283.2)"/><rect x="809.7" y="304.9" width="11.8" height="12.3" fill="#e9ebf0" transform="rotate(-22.4 815.6 311.0)"/><rect x="813.7" y="317.4" width="17.3" height="13.6" fill="#e9ebf0" transform="rotate(-22.4 822.4 324.2)"/><rect x="820.9" y="332.2" width="15.2" height="13.3" fill="#e9ebf0" transform="rotate(-22.4 828.5 338.8)"/><rect x="826.8" y="345.3" width="12.3" height="12.6" fill="#e9ebf0" transform="rotate(-22.4 832.9 351.6)"/><rect x="824.7" y="359.9" width="19.4" height="14.5" fill="#e9ebf0" transform="rotate(-22.4 834.5 367.2)"/><rect x="835.1" y="374.2" width="16.0" height="12.1" fill="#e9ebf0" transform="rotate(-22.4 843.1 380.2)"/><rect x="842.9" y="387.8" width="15.2" height="15.1" fill="#e9ebf0" transform="rotate(-22.4 850.5 395.3)"/><rect x="851.6" y="414.7" width="13.2" height="12.4" fill="#e9ebf0" transform="rotate(-22.4 858.3 420.9)"/><rect x="862.3" y="428.3" width="13.5" height="14.3" fill="#e9ebf0" transform="rotate(-22.4 869.0 435.4)"/><rect x="872.2" y="457.3" width="13.5" height="15.9" fill="#e9ebf0" transform="rotate(-22.4 878.9 465.2)"/><rect x="880.3" y="487.7" width="14.0" height="11.2" fill="#e9ebf0" transform="rotate(-22.4 887.3 493.2)"/><rect x="886.5" y="498.8" width="20.0" height="14.9" fill="#e9ebf0" transform="rotate(-22.4 896.5 506.3)"/><rect x="892.5" y="510.5" width="11.4" height="11.1" fill="#e9ebf0" transform="rotate(-22.4 898.2 516.0)"/><rect x="808.1" y="258.6" width="13.6" height="9.5" fill="#e9ebf0" transform="rotate(-22.4 814.9 263.4)"/><rect x="826.8" y="311.1" width="13.9" height="16.0" fill="#e9ebf0" transform="rotate(-22.4 833.8 319.1)"/><rect x="843.0" y="350.2" width="21.0" height="13.2" fill="#e9ebf0" transform="rotate(-22.4 853.5 356.8)"/><rect x="847.2" y="364.5" width="17.5" height="14.5" fill="#e9ebf0" transform="rotate(-22.4 855.9 371.7)"/><rect x="862.2" y="394.5" width="16.7" height="16.2" fill="#e9ebf0" transform="rotate(-22.4 870.6 402.6)"/><rect x="867.9" y="405.2" width="16.5" height="12.8" fill="#e9ebf0" transform="rotate(-22.4 876.2 411.6)"/><rect x="871.7" y="425.5" width="19.4" height="8.7" fill="#e9ebf0" transform="rotate(-22.4 881.4 429.9)"/><rect x="878.1" y="431.6" width="19.7" height="16.4" fill="#e9ebf0" transform="rotate(-22.4 887.9 439.8)"/><rect x="884.7" y="449.3" width="11.6" height="11.8" fill="#e9ebf0" transform="rotate(-22.4 890.5 455.2)"/><rect x="903.9" y="492.7" width="16.9" height="8.0" fill="#e9ebf0" transform="rotate(-22.4 912.4 496.7)"/><rect x="902.9" y="506.5" width="18.7" height="9.0" fill="#e9ebf0" transform="rotate(-22.4 912.3 511.0)"/><rect x="820.9" y="249.1" width="12.7" height="15.5" fill="#e9ebf0" transform="rotate(-22.4 827.3 256.8)"/><rect x="827.7" y="262.1" width="14.0" height="12.9" fill="#e9ebf0" transform="rotate(-22.4 834.7 268.5)"/><rect x="847.4" y="306.3" width="15.3" height="13.1" fill="#e9ebf0" transform="rotate(-22.4 855.0 312.8)"/><rect x="849.7" y="316.3" width="18.1" height="16.3" fill="#e9ebf0" transform="rotate(-22.4 858.7 324.5)"/><rect x="867.3" y="362.6" width="9.7" height="9.6" fill="#e9ebf0" transform="rotate(-22.4 872.2 367.4)"/><rect x="878.7" y="388.3" width="9.7" height="13.5" fill="#e9ebf0" transform="rotate(-22.4 883.6 395.0)"/><rect x="880.2" y="405.8" width="20.1" height="8.1" fill="#e9ebf0" transform="rotate(-22.4 890.2 409.8)"/><rect x="898.1" y="430.2" width="9.1" height="11.2" fill="#e9ebf0" transform="rotate(-22.4 902.6 435.8)"/><rect x="902.3" y="445.3" width="13.1" height="15.6" fill="#e9ebf0" transform="rotate(-22.4 908.8 453.1)"/><rect x="921.3" y="488.5" width="10.4" height="10.0" fill="#e9ebf0" transform="rotate(-22.4 926.5 493.5)"/><rect x="921.1" y="497.1" width="20.5" height="16.4" fill="#e9ebf0" transform="rotate(-22.4 931.3 505.3)"/><rect x="927.3" y="510.9" width="18.0" height="12.7" fill="#e9ebf0" transform="rotate(-22.4 936.3 517.2)"/><rect x="846.8" y="255.9" width="12.9" height="14.8" fill="#e9ebf0" transform="rotate(-22.4 853.3 263.4)"/><rect x="857.4" y="284.0" width="12.3" height="11.4" fill="#e9ebf0" transform="rotate(-22.4 863.6 289.7)"/><rect x="862.0" y="296.8" width="9.7" height="13.7" fill="#e9ebf0" transform="rotate(-22.4 866.9 303.7)"/><rect x="879.9" y="338.9" width="10.6" height="8.2" fill="#e9ebf0" transform="rotate(-22.4 885.2 343.0)"/><rect x="881.9" y="354.8" width="15.3" height="8.0" fill="#e9ebf0" transform="rotate(-22.4 889.5 358.8)"/><rect x="894.3" y="368.3" width="9.8" height="13.9" fill="#e9ebf0" transform="rotate(-22.4 899.2 375.3)"/><rect x="894.1" y="381.6" width="16.7" height="16.5" fill="#e9ebf0" transform="rotate(-22.4 902.5 389.9)"/><rect x="910.0" y="420.4" width="20.0" height="15.1" fill="#e9ebf0" transform="rotate(-22.4 920.0 427.9)"/><rect x="931.7" y="466.4" width="9.7" height="12.9" fill="#e9ebf0" transform="rotate(-22.4 936.5 472.8)"/><rect x="934.2" y="476.5" width="16.3" height="14.6" fill="#e9ebf0" transform="rotate(-22.4 942.3 483.8)"/><rect x="942.4" y="494.5" width="13.4" height="12.7" fill="#e9ebf0" transform="rotate(-22.4 949.1 500.8)"/><rect x="948.1" y="505.1" width="12.4" height="11.5" fill="#e9ebf0" transform="rotate(-22.4 954.3 510.8)"/><rect x="860.9" y="267.1" width="20.6" height="11.3" fill="#e9ebf0" transform="rotate(-22.4 871.2 272.8)"/><rect x="872.6" y="277.6" width="14.3" height="10.8" fill="#e9ebf0" transform="rotate(-22.4 879.8 283.0)"/><rect x="889.0" y="317.2" width="14.1" height="15.2" fill="#e9ebf0" transform="rotate(-22.4 896.1 324.8)"/><rect x="924.9" y="415.1" width="15.3" height="11.2" fill="#e9ebf0" transform="rotate(-22.4 932.6 420.7)"/><rect x="932.3" y="430.8" width="20.2" height="8.1" fill="#e9ebf0" transform="rotate(-22.4 942.3 434.9)"/><rect x="939.2" y="445.1" width="17.1" height="12.4" fill="#e9ebf0" transform="rotate(-22.4 947.7 451.3)"/><rect x="946.6" y="459.0" width="14.7" height="13.1" fill="#e9ebf0" transform="rotate(-22.4 953.9 465.5)"/><rect x="953.8" y="485.2" width="17.8" height="14.6" fill="#e9ebf0" transform="rotate(-22.4 962.7 492.5)"/><rect x="961.3" y="499.4" width="17.1" height="11.4" fill="#e9ebf0" transform="rotate(-22.4 969.9 505.1)"/><rect x="879.2" y="255.5" width="17.9" height="14.7" fill="#e9ebf0" transform="rotate(-22.4 888.2 262.9)"/><rect x="883.3" y="274.4" width="15.6" height="13.2" fill="#e9ebf0" transform="rotate(-22.4 891.1 281.0)"/><rect x="895.1" y="295.4" width="20.6" height="13.5" fill="#e9ebf0" transform="rotate(-22.4 905.5 302.1)"/><rect x="905.1" y="316.9" width="16.2" height="8.1" fill="#e9ebf0" transform="rotate(-22.4 913.2 320.9)"/><rect x="917.3" y="341.3" width="10.6" height="15.6" fill="#e9ebf0" transform="rotate(-22.4 922.6 349.1)"/><rect x="919.6" y="354.1" width="10.3" height="10.4" fill="#e9ebf0" transform="rotate(-22.4 924.8 359.3)"/><rect x="928.4" y="366.6" width="12.5" height="11.4" fill="#e9ebf0" transform="rotate(-22.4 934.6 372.3)"/><rect x="939.7" y="393.9" width="9.5" height="13.2" fill="#e9ebf0" transform="rotate(-22.4 944.5 400.5)"/><rect x="948.8" y="424.4" width="9.8" height="16.3" fill="#e9ebf0" transform="rotate(-22.4 953.6 432.6)"/><rect x="960.7" y="450.5" width="10.1" height="11.2" fill="#e9ebf0" transform="rotate(-22.4 965.7 456.1)"/><rect x="894.2" y="250.4" width="10.8" height="11.6" fill="#e9ebf0" transform="rotate(-22.4 899.6 256.2)"/><rect x="898.7" y="261.8" width="17.8" height="15.9" fill="#e9ebf0" transform="rotate(-22.4 907.6 269.8)"/><rect x="908.0" y="282.1" width="10.0" height="13.8" fill="#e9ebf0" transform="rotate(-22.4 913.0 289.0)"/><rect x="918.3" y="302.2" width="17.6" height="16.2" fill="#e9ebf0" transform="rotate(-22.4 927.1 310.3)"/><rect x="937.0" y="351.5" width="13.6" height="10.3" fill="#e9ebf0" transform="rotate(-22.4 943.8 356.7)"/><rect x="936.1" y="361.9" width="20.2" height="10.8" fill="#e9ebf0" transform="rotate(-22.4 946.2 367.3)"/><rect x="950.3" y="378.0" width="14.2" height="8.9" fill="#e9ebf0" transform="rotate(-22.4 957.4 382.5)"/><rect x="952.9" y="391.0" width="14.0" height="16.8" fill="#e9ebf0" transform="rotate(-22.4 959.9 399.3)"/><rect x="959.2" y="406.0" width="9.9" height="15.1" fill="#e9ebf0" transform="rotate(-22.4 964.2 413.5)"/><rect x="964.0" y="418.0" width="14.1" height="16.9" fill="#e9ebf0" transform="rotate(-22.4 971.1 426.5)"/><rect x="973.9" y="432.2" width="13.5" height="14.2" fill="#e9ebf0" transform="rotate(-22.4 980.6 439.4)"/><rect x="990.3" y="476.2" width="11.3" height="8.9" fill="#e9ebf0" transform="rotate(-22.4 996.0 480.6)"/><rect x="989.8" y="485.3" width="19.2" height="11.7" fill="#e9ebf0" transform="rotate(-22.4 999.4 491.2)"/><rect x="928.4" y="288.0" width="16.4" height="9.7" fill="#e9ebf0" transform="rotate(-22.4 936.6 292.8)"/><rect x="937.6" y="301.1" width="11.9" height="11.0" fill="#e9ebf0" transform="rotate(-22.4 943.6 306.6)"/><rect x="945.7" y="330.5" width="14.2" height="8.0" fill="#e9ebf0" transform="rotate(-22.4 952.8 334.6)"/><rect x="954.2" y="341.2" width="12.5" height="12.1" fill="#e9ebf0" transform="rotate(-22.4 960.4 347.3)"/><rect x="953.7" y="360.1" width="18.1" height="9.8" fill="#e9ebf0" transform="rotate(-22.4 962.8 364.9)"/><rect x="959.7" y="368.6" width="15.3" height="14.8" fill="#e9ebf0" transform="rotate(-22.4 967.3 376.0)"/><rect x="970.9" y="387.7" width="15.8" height="8.4" fill="#e9ebf0" transform="rotate(-22.4 978.8 391.9)"/><rect x="971.7" y="397.1" width="19.8" height="8.5" fill="#e9ebf0" transform="rotate(-22.4 981.6 401.3)"/><rect x="981.9" y="409.3" width="15.7" height="13.4" fill="#e9ebf0" transform="rotate(-22.4 989.7 416.0)"/><rect x="982.8" y="423.6" width="17.9" height="15.0" fill="#e9ebf0" transform="rotate(-22.4 991.7 431.2)"/><rect x="999.5" y="456.1" width="11.1" height="11.1" fill="#e9ebf0" transform="rotate(-22.4 1005.1 461.6)"/><rect x="1014.8" y="492.4" width="15.3" height="15.6" fill="#e9ebf0" transform="rotate(-22.4 1022.5 500.2)"/><rect x="1018.3" y="506.3" width="18.1" height="14.4" fill="#e9ebf0" transform="rotate(-22.4 1027.3 513.5)"/><rect x="930.4" y="253.0" width="15.7" height="11.3" fill="#e9ebf0" transform="rotate(-22.4 938.3 258.6)"/><rect x="936.9" y="264.8" width="19.9" height="8.9" fill="#e9ebf0" transform="rotate(-22.4 946.8 269.2)"/><rect x="943.3" y="277.8" width="16.5" height="16.0" fill="#e9ebf0" transform="rotate(-22.4 951.5 285.7)"/><rect x="944.3" y="292.9" width="19.5" height="13.4" fill="#e9ebf0" transform="rotate(-22.4 954.1 299.6)"/><rect x="960.2" y="321.3" width="15.8" height="16.2" fill="#e9ebf0" transform="rotate(-22.4 968.1 329.4)"/><rect x="964.0" y="337.1" width="19.9" height="12.2" fill="#e9ebf0" transform="rotate(-22.4 973.9 343.2)"/><rect x="977.5" y="363.0" width="17.3" height="10.7" fill="#e9ebf0" transform="rotate(-22.4 986.2 368.3)"/><rect x="981.9" y="377.1" width="17.5" height="16.2" fill="#e9ebf0" transform="rotate(-22.4 990.7 385.2)"/><rect x="989.5" y="392.8" width="12.1" height="14.5" fill="#e9ebf0" transform="rotate(-22.4 995.5 400.0)"/><rect x="995.7" y="401.3" width="11.7" height="14.7" fill="#e9ebf0" transform="rotate(-22.4 1001.5 408.7)"/><rect x="1003.8" y="417.4" width="15.4" height="16.8" fill="#e9ebf0" transform="rotate(-22.4 1011.5 425.9)"/><rect x="1009.1" y="431.4" width="9.6" height="15.8" fill="#e9ebf0" transform="rotate(-22.4 1013.9 439.3)"/><rect x="1013.2" y="445.2" width="13.6" height="12.2" fill="#e9ebf0" transform="rotate(-22.4 1020.0 451.3)"/><rect x="1016.1" y="464.0" width="16.5" height="8.7" fill="#e9ebf0" transform="rotate(-22.4 1024.3 468.3)"/><rect x="1028.5" y="487.6" width="13.4" height="12.4" fill="#e9ebf0" transform="rotate(-22.4 1035.2 493.8)"/><rect x="1043.3" y="517.0" width="12.1" height="11.2" fill="#e9ebf0" transform="rotate(-22.4 1049.3 522.6)"/><rect x="949.1" y="250.0" width="9.6" height="10.9" fill="#e9ebf0" transform="rotate(-22.4 953.9 255.5)"/><rect x="952.9" y="257.4" width="16.7" height="13.8" fill="#e9ebf0" transform="rotate(-22.4 961.2 264.3)"/><rect x="964.6" y="287.0" width="12.5" height="9.9" fill="#e9ebf0" transform="rotate(-22.4 970.9 292.0)"/><rect x="970.8" y="298.0" width="17.9" height="15.3" fill="#e9ebf0" transform="rotate(-22.4 979.8 305.7)"/><rect x="983.0" y="330.4" width="16.6" height="13.4" fill="#e9ebf0" transform="rotate(-22.4 991.3 337.1)"/><rect x="991.0" y="342.4" width="13.2" height="12.5" fill="#e9ebf0" transform="rotate(-22.4 997.6 348.7)"/><rect x="990.6" y="357.8" width="19.0" height="13.9" fill="#e9ebf0" transform="rotate(-22.4 1000.1 364.8)"/><rect x="1002.0" y="372.4" width="10.6" height="12.5" fill="#e9ebf0" transform="rotate(-22.4 1007.3 378.6)"/><rect x="1007.9" y="397.6" width="17.4" height="9.5" fill="#e9ebf0" transform="rotate(-22.4 1016.6 402.4)"/><rect x="1020.1" y="422.4" width="20.7" height="14.7" fill="#e9ebf0" transform="rotate(-22.4 1030.4 429.8)"/><rect x="1033.7" y="451.8" width="17.4" height="14.3" fill="#e9ebf0" transform="rotate(-22.4 1042.4 459.0)"/><rect x="1042.3" y="465.4" width="14.6" height="14.4" fill="#e9ebf0" transform="rotate(-22.4 1049.6 472.7)"/><rect x="1044.9" y="481.4" width="19.6" height="9.3" fill="#e9ebf0" transform="rotate(-22.4 1054.7 486.1)"/><rect x="1051.4" y="495.2" width="14.3" height="9.8" fill="#e9ebf0" transform="rotate(-22.4 1058.6 500.1)"/><rect x="974.2" y="269.4" width="12.9" height="8.1" fill="#e9ebf0" transform="rotate(-22.4 980.6 273.4)"/><rect x="989.8" y="297.7" width="9.8" height="9.1" fill="#e9ebf0" transform="rotate(-22.4 994.7 302.3)"/><rect x="997.5" y="320.2" width="20.6" height="15.7" fill="#e9ebf0" transform="rotate(-22.4 1007.8 328.1)"/><rect x="1001.4" y="336.6" width="18.2" height="12.2" fill="#e9ebf0" transform="rotate(-22.4 1010.5 342.7)"/><rect x="1027.7" y="391.7" width="16.0" height="11.8" fill="#e9ebf0" transform="rotate(-22.4 1035.7 397.6)"/><rect x="1043.0" y="429.3" width="15.8" height="16.4" fill="#e9ebf0" transform="rotate(-22.4 1050.9 437.5)"/><rect x="1049.4" y="446.4" width="17.6" height="10.5" fill="#e9ebf0" transform="rotate(-22.4 1058.2 451.7)"/><rect x="1053.9" y="458.0" width="19.1" height="12.7" fill="#e9ebf0" transform="rotate(-22.4 1063.4 464.3)"/><rect x="1058.8" y="477.4" width="17.9" height="9.6" fill="#e9ebf0" transform="rotate(-22.4 1067.7 482.2)"/><rect x="1066.3" y="489.2" width="13.8" height="14.9" fill="#e9ebf0" transform="rotate(-22.4 1073.2 496.6)"/><rect x="1077.3" y="513.9" width="16.3" height="13.8" fill="#e9ebf0" transform="rotate(-22.4 1085.5 520.9)"/><rect x="998.3" y="277.7" width="12.7" height="10.2" fill="#e9ebf0" transform="rotate(-22.4 1004.7 282.8)"/><rect x="1004.6" y="289.7" width="11.5" height="10.3" fill="#e9ebf0" transform="rotate(-22.4 1010.4 294.9)"/><rect x="1016.9" y="319.2" width="14.0" height="9.2" fill="#e9ebf0" transform="rotate(-22.4 1023.9 323.8)"/><rect x="1016.4" y="328.0" width="17.5" height="13.0" fill="#e9ebf0" transform="rotate(-22.4 1025.2 334.5)"/><rect x="1022.0" y="346.4" width="20.0" height="11.2" fill="#e9ebf0" transform="rotate(-22.4 1032.0 351.9)"/><rect x="1029.0" y="359.1" width="16.0" height="10.7" fill="#e9ebf0" transform="rotate(-22.4 1037.0 364.4)"/><rect x="1039.7" y="386.0" width="14.0" height="9.3" fill="#e9ebf0" transform="rotate(-22.4 1046.7 390.7)"/><rect x="1046.8" y="399.3" width="19.6" height="13.5" fill="#e9ebf0" transform="rotate(-22.4 1056.6 406.1)"/><rect x="1062.2" y="427.1" width="16.1" height="15.4" fill="#e9ebf0" transform="rotate(-22.4 1070.3 434.9)"/><rect x="1064.4" y="438.3" width="14.8" height="14.4" fill="#e9ebf0" transform="rotate(-22.4 1071.8 445.5)"/><rect x="1087.6" y="481.2" width="9.2" height="11.8" fill="#e9ebf0" transform="rotate(-22.4 1092.3 487.1)"/><rect x="1092.1" y="493.3" width="9.3" height="14.5" fill="#e9ebf0" transform="rotate(-22.4 1096.7 500.6)"/><rect x="1098.3" y="509.8" width="10.6" height="12.7" fill="#e9ebf0" transform="rotate(-22.4 1103.6 516.1)"/><rect x="1006.7" y="256.2" width="15.5" height="9.9" fill="#e9ebf0" transform="rotate(-22.4 1014.4 261.2)"/><rect x="1039.5" y="338.3" width="18.4" height="9.5" fill="#e9ebf0" transform="rotate(-22.4 1048.7 343.1)"/><rect x="1043.7" y="352.4" width="20.9" height="11.0" fill="#e9ebf0" transform="rotate(-22.4 1054.2 357.9)"/><rect x="1055.2" y="367.4" width="10.2" height="12.7" fill="#e9ebf0" transform="rotate(-22.4 1060.3 373.7)"/><rect x="1059.1" y="375.2" width="16.3" height="16.6" fill="#e9ebf0" transform="rotate(-22.4 1067.3 383.5)"/><rect x="1067.8" y="407.1" width="17.8" height="14.1" fill="#e9ebf0" transform="rotate(-22.4 1076.7 414.2)"/><rect x="1083.6" y="435.0" width="11.8" height="8.9" fill="#e9ebf0" transform="rotate(-22.4 1089.5 439.4)"/><rect x="1085.8" y="448.5" width="12.6" height="11.3" fill="#e9ebf0" transform="rotate(-22.4 1092.0 454.1)"/><rect x="1095.0" y="461.7" width="15.6" height="11.6" fill="#e9ebf0" transform="rotate(-22.4 1102.8 467.5)"/><rect x="1100.0" y="476.2" width="15.1" height="11.2" fill="#e9ebf0" transform="rotate(-22.4 1107.6 481.7)"/><rect x="1102.8" y="490.4" width="12.4" height="8.4" fill="#e9ebf0" transform="rotate(-22.4 1109.0 494.6)"/><rect x="1107.7" y="501.7" width="18.1" height="12.1" fill="#e9ebf0" transform="rotate(-22.4 1116.8 507.8)"/><rect x="1044.5" y="289.1" width="9.3" height="9.8" fill="#e9ebf0" transform="rotate(-22.4 1049.1 294.1)"/><rect x="1055.5" y="333.0" width="14.8" height="8.2" fill="#e9ebf0" transform="rotate(-22.4 1062.9 337.1)"/><rect x="1065.5" y="354.6" width="15.9" height="16.4" fill="#e9ebf0" transform="rotate(-22.4 1073.4 362.8)"/><rect x="1096.5" y="430.2" width="14.0" height="10.0" fill="#e9ebf0" transform="rotate(-22.4 1103.5 435.1)"/><rect x="1106.2" y="442.1" width="12.6" height="12.2" fill="#e9ebf0" transform="rotate(-22.4 1112.5 448.2)"/><rect x="1111.7" y="466.5" width="19.9" height="15.2" fill="#e9ebf0" transform="rotate(-22.4 1121.6 474.1)"/><rect x="1126.0" y="494.3" width="13.2" height="16.6" fill="#e9ebf0" transform="rotate(-22.4 1132.6 502.6)"/><rect x="1057.4" y="283.9" width="12.4" height="10.8" fill="#e9ebf0" transform="rotate(-22.4 1063.6 289.2)"/><rect x="1083.0" y="351.6" width="16.8" height="16.5" fill="#e9ebf0" transform="rotate(-22.4 1091.4 359.8)"/><rect x="1091.5" y="378.2" width="18.4" height="11.9" fill="#e9ebf0" transform="rotate(-22.4 1100.7 384.1)"/><rect x="1096.3" y="395.8" width="19.8" height="10.5" fill="#e9ebf0" transform="rotate(-22.4 1106.2 401.0)"/><rect x="1122.5" y="448.7" width="16.0" height="16.7" fill="#e9ebf0" transform="rotate(-22.4 1130.5 457.0)"/><rect x="1129.1" y="466.4" width="16.5" height="11.1" fill="#e9ebf0" transform="rotate(-22.4 1137.4 472.0)"/><rect x="1140.5" y="492.3" width="14.6" height="15.2" fill="#e9ebf0" transform="rotate(-22.4 1147.8 499.9)"/><rect x="1144.3" y="502.9" width="18.6" height="13.4" fill="#e9ebf0" transform="rotate(-22.4 1153.6 509.6)"/><rect x="1153.0" y="516.4" width="11.5" height="14.2" fill="#e9ebf0" transform="rotate(-22.4 1158.8 523.5)"/><rect x="1064.7" y="249.2" width="9.4" height="11.4" fill="#e9ebf0" transform="rotate(-22.4 1069.4 254.9)"/><rect x="1072.3" y="274.8" width="19.0" height="16.8" fill="#e9ebf0" transform="rotate(-22.4 1081.8 283.2)"/><rect x="1076.2" y="288.4" width="18.6" height="8.8" fill="#e9ebf0" transform="rotate(-22.4 1085.5 292.8)"/><rect x="1080.5" y="300.6" width="16.6" height="15.1" fill="#e9ebf0" transform="rotate(-22.4 1088.8 308.1)"/><rect x="1087.3" y="322.2" width="15.3" height="8.2" fill="#e9ebf0" transform="rotate(-22.4 1095.0 326.3)"/><rect x="1097.2" y="329.8" width="12.5" height="12.1" fill="#e9ebf0" transform="rotate(-22.4 1103.5 335.8)"/><rect x="1113.6" y="371.0" width="9.8" height="11.3" fill="#e9ebf0" transform="rotate(-22.4 1118.5 376.7)"/><rect x="1122.7" y="406.2" width="11.2" height="8.5" fill="#e9ebf0" transform="rotate(-22.4 1128.4 410.4)"/><rect x="1125.0" y="414.1" width="15.9" height="13.9" fill="#e9ebf0" transform="rotate(-22.4 1133.0 421.1)"/><rect x="1133.2" y="429.7" width="16.0" height="9.0" fill="#e9ebf0" transform="rotate(-22.4 1141.2 434.2)"/><rect x="1146.8" y="455.5" width="15.7" height="9.7" fill="#e9ebf0" transform="rotate(-22.4 1154.6 460.3)"/><rect x="1148.5" y="470.3" width="18.4" height="15.6" fill="#e9ebf0" transform="rotate(-22.4 1157.7 478.1)"/><rect x="1163.8" y="497.3" width="12.5" height="12.6" fill="#e9ebf0" transform="rotate(-22.4 1170.0 503.6)"/><rect x="1092.1" y="268.2" width="9.9" height="16.1" fill="#e9ebf0" transform="rotate(-22.4 1097.0 276.3)"/><rect x="1092.0" y="280.6" width="19.8" height="12.6" fill="#e9ebf0" transform="rotate(-22.4 1101.9 286.9)"/><rect x="1095.0" y="298.0" width="18.1" height="13.0" fill="#e9ebf0" transform="rotate(-22.4 1104.0 304.5)"/><rect x="1109.7" y="321.9" width="17.8" height="13.4" fill="#e9ebf0" transform="rotate(-22.4 1118.6 328.6)"/><rect x="1123.1" y="355.5" width="12.1" height="11.3" fill="#e9ebf0" transform="rotate(-22.4 1129.2 361.2)"/><rect x="1136.7" y="398.4" width="14.0" height="10.1" fill="#e9ebf0" transform="rotate(-22.4 1143.7 403.5)"/><rect x="1141.0" y="409.2" width="18.6" height="16.7" fill="#e9ebf0" transform="rotate(-22.4 1150.3 417.5)"/><rect x="1159.2" y="439.9" width="9.0" height="11.1" fill="#e9ebf0" transform="rotate(-22.4 1163.7 445.5)"/><rect x="1158.1" y="451.6" width="16.4" height="8.6" fill="#e9ebf0" transform="rotate(-22.4 1166.3 455.9)"/><rect x="1169.7" y="477.1" width="15.3" height="11.1" fill="#e9ebf0" transform="rotate(-22.4 1177.4 482.7)"/><rect x="1175.8" y="493.7" width="15.1" height="8.8" fill="#e9ebf0" transform="rotate(-22.4 1183.3 498.1)"/><rect x="1188.4" y="504.8" width="10.6" height="13.7" fill="#e9ebf0" transform="rotate(-22.4 1193.6 511.6)"/><rect x="1186.5" y="519.1" width="15.4" height="9.6" fill="#e9ebf0" transform="rotate(-22.4 1194.1 523.9)"/><rect x="1098.9" y="250.3" width="9.5" height="10.0" fill="#e9ebf0" transform="rotate(-22.4 1103.6 255.3)"/><rect x="1114.9" y="291.5" width="19.3" height="14.5" fill="#e9ebf0" transform="rotate(-22.4 1124.5 298.8)"/><rect x="1119.7" y="304.0" width="16.2" height="16.8" fill="#e9ebf0" transform="rotate(-22.4 1127.8 312.4)"/><rect x="1128.6" y="317.8" width="14.3" height="15.6" fill="#e9ebf0" transform="rotate(-22.4 1135.7 325.6)"/><rect x="1127.9" y="334.6" width="20.6" height="10.2" fill="#e9ebf0" transform="rotate(-22.4 1138.2 339.7)"/><rect x="1153.5" y="389.1" width="19.6" height="14.3" fill="#e9ebf0" transform="rotate(-22.4 1163.3 396.2)"/><rect x="1166.6" y="428.6" width="20.7" height="16.5" fill="#e9ebf0" transform="rotate(-22.4 1177.0 436.9)"/><rect x="1173.2" y="444.1" width="19.1" height="9.6" fill="#e9ebf0" transform="rotate(-22.4 1182.7 448.9)"/><rect x="1190.8" y="474.0" width="10.5" height="13.2" fill="#e9ebf0" transform="rotate(-22.4 1196.0 480.7)"/><rect x="1193.4" y="483.4" width="17.1" height="10.3" fill="#e9ebf0" transform="rotate(-22.4 1202.0 488.6)"/><rect x="1202.7" y="509.4" width="20.3" height="13.7" fill="#e9ebf0" transform="rotate(-22.4 1212.8 516.3)"/><rect x="1125.8" y="271.2" width="11.7" height="14.0" fill="#e9ebf0" transform="rotate(-22.4 1131.6 278.2)"/><rect x="1125.4" y="282.1" width="16.8" height="15.4" fill="#e9ebf0" transform="rotate(-22.4 1133.8 289.8)"/><rect x="1165.0" y="367.8" width="11.8" height="8.8" fill="#e9ebf0" transform="rotate(-22.4 1170.9 372.2)"/><rect x="1168.3" y="379.4" width="15.8" height="15.5" fill="#e9ebf0" transform="rotate(-22.4 1176.2 387.1)"/><rect x="1180.3" y="396.2" width="11.3" height="13.3" fill="#e9ebf0" transform="rotate(-22.4 1185.9 402.8)"/><rect x="1179.9" y="411.1" width="11.5" height="8.1" fill="#e9ebf0" transform="rotate(-22.4 1185.6 415.2)"/><rect x="1187.2" y="426.6" width="19.4" height="8.7" fill="#e9ebf0" transform="rotate(-22.4 1196.9 430.9)"/><rect x="1195.2" y="434.8" width="13.1" height="14.3" fill="#e9ebf0" transform="rotate(-22.4 1201.8 441.9)"/><rect x="1198.9" y="448.6" width="10.4" height="14.4" fill="#e9ebf0" transform="rotate(-22.4 1204.1 455.8)"/><rect x="1209.7" y="479.6" width="12.2" height="12.4" fill="#e9ebf0" transform="rotate(-22.4 1215.8 485.8)"/><rect x="1213.8" y="489.7" width="14.0" height="15.3" fill="#e9ebf0" transform="rotate(-22.4 1220.8 497.3)"/><rect x="1221.7" y="508.9" width="15.8" height="11.1" fill="#e9ebf0" transform="rotate(-22.4 1229.6 514.4)"/><rect x="1138.8" y="267.5" width="15.4" height="12.1" fill="#e9ebf0" transform="rotate(-22.4 1146.5 273.6)"/><rect x="1146.4" y="279.8" width="13.9" height="15.2" fill="#e9ebf0" transform="rotate(-22.4 1153.4 287.4)"/><rect x="1152.8" y="291.4" width="11.8" height="10.7" fill="#e9ebf0" transform="rotate(-22.4 1158.7 296.8)"/><rect x="1155.3" y="306.6" width="19.3" height="9.4" fill="#e9ebf0" transform="rotate(-22.4 1165.0 311.3)"/><rect x="1171.1" y="330.6" width="12.1" height="16.1" fill="#e9ebf0" transform="rotate(-22.4 1177.2 338.6)"/><rect x="1186.2" y="375.2" width="17.9" height="16.7" fill="#e9ebf0" transform="rotate(-22.4 1195.2 383.6)"/><rect x="1188.9" y="390.0" width="19.0" height="16.0" fill="#e9ebf0" transform="rotate(-22.4 1198.4 398.0)"/><rect x="1199.2" y="407.2" width="11.4" height="9.5" fill="#e9ebf0" transform="rotate(-22.4 1204.9 411.9)"/><rect x="1202.0" y="417.0" width="13.6" height="12.1" fill="#e9ebf0" transform="rotate(-22.4 1208.8 423.1)"/><rect x="1210.1" y="431.2" width="9.6" height="12.3" fill="#e9ebf0" transform="rotate(-22.4 1215.0 437.4)"/><rect x="1232.8" y="497.2" width="15.9" height="15.6" fill="#e9ebf0" transform="rotate(-22.4 1240.7 505.0)"/><rect x="1240.9" y="516.4" width="15.5" height="12.2" fill="#e9ebf0" transform="rotate(-22.4 1248.7 522.5)"/><rect x="1157.2" y="260.4" width="14.6" height="11.8" fill="#e9ebf0" transform="rotate(-22.4 1164.5 266.3)"/><rect x="1177.9" y="325.4" width="20.1" height="12.9" fill="#e9ebf0" transform="rotate(-22.4 1187.9 331.8)"/><rect x="1205.2" y="367.5" width="11.1" height="10.4" fill="#e9ebf0" transform="rotate(-22.4 1210.8 372.7)"/><rect x="1217.1" y="410.4" width="18.6" height="16.1" fill="#e9ebf0" transform="rotate(-22.4 1226.5 418.5)"/><rect x="1220.0" y="424.4" width="20.2" height="13.5" fill="#e9ebf0" transform="rotate(-22.4 1230.1 431.2)"/><rect x="1236.0" y="453.0" width="15.8" height="15.1" fill="#e9ebf0" transform="rotate(-22.4 1244.0 460.5)"/><rect x="1248.8" y="480.3" width="14.3" height="12.7" fill="#e9ebf0" transform="rotate(-22.4 1255.9 486.6)"/><rect x="1186.3" y="277.9" width="9.1" height="8.6" fill="#e9ebf0" transform="rotate(-22.4 1190.9 282.2)"/><rect x="1188.0" y="294.0" width="14.4" height="15.7" fill="#e9ebf0" transform="rotate(-22.4 1195.2 301.8)"/><rect x="1195.7" y="306.4" width="9.6" height="12.1" fill="#e9ebf0" transform="rotate(-22.4 1200.5 312.5)"/><rect x="1219.4" y="366.2" width="10.8" height="8.6" fill="#e9ebf0" transform="rotate(-22.4 1224.8 370.5)"/><rect x="1219.6" y="376.3" width="17.6" height="16.9" fill="#e9ebf0" transform="rotate(-22.4 1228.4 384.7)"/><rect x="1232.1" y="393.1" width="11.1" height="8.7" fill="#e9ebf0" transform="rotate(-22.4 1237.6 397.5)"/><rect x="1246.1" y="433.5" width="11.1" height="11.9" fill="#e9ebf0" transform="rotate(-22.4 1251.6 439.5)"/><rect x="1248.6" y="444.8" width="15.5" height="15.6" fill="#e9ebf0" transform="rotate(-22.4 1256.4 452.6)"/><rect x="1254.8" y="458.8" width="15.6" height="9.5" fill="#e9ebf0" transform="rotate(-22.4 1262.6 463.6)"/><rect x="1264.6" y="472.5" width="17.0" height="13.5" fill="#e9ebf0" transform="rotate(-22.4 1273.1 479.3)"/><rect x="1272.9" y="487.8" width="10.1" height="15.6" fill="#e9ebf0" transform="rotate(-22.4 1277.9 495.6)"/><rect x="1270.6" y="504.0" width="19.2" height="9.5" fill="#e9ebf0" transform="rotate(-22.4 1280.3 508.8)"/><rect x="1279.1" y="511.0" width="15.1" height="16.9" fill="#e9ebf0" transform="rotate(-22.4 1286.6 519.5)"/><rect x="1185.7" y="246.5" width="15.1" height="15.7" fill="#e9ebf0" transform="rotate(-22.4 1193.3 254.4)"/><rect x="1191.3" y="256.5" width="16.1" height="14.4" fill="#e9ebf0" transform="rotate(-22.4 1199.3 263.7)"/><rect x="1195.6" y="273.5" width="20.4" height="8.2" fill="#e9ebf0" transform="rotate(-22.4 1205.8 277.6)"/><rect x="1204.0" y="289.9" width="19.2" height="10.2" fill="#e9ebf0" transform="rotate(-22.4 1213.5 295.0)"/><rect x="1215.5" y="313.2" width="16.4" height="15.9" fill="#e9ebf0" transform="rotate(-22.4 1223.7 321.1)"/><rect x="1227.5" y="341.6" width="17.2" height="9.4" fill="#e9ebf0" transform="rotate(-22.4 1236.1 346.3)"/><rect x="1242.1" y="367.4" width="13.6" height="16.7" fill="#e9ebf0" transform="rotate(-22.4 1248.9 375.7)"/><rect x="1248.6" y="384.0" width="9.2" height="12.1" fill="#e9ebf0" transform="rotate(-22.4 1253.3 390.1)"/><rect x="1250.8" y="393.9" width="16.6" height="12.9" fill="#e9ebf0" transform="rotate(-22.4 1259.1 400.3)"/><rect x="1257.3" y="411.8" width="16.4" height="10.4" fill="#e9ebf0" transform="rotate(-22.4 1265.6 417.0)"/><rect x="1261.0" y="423.0" width="11.4" height="12.5" fill="#e9ebf0" transform="rotate(-22.4 1266.7 429.2)"/><rect x="1269.3" y="436.3" width="11.5" height="12.7" fill="#e9ebf0" transform="rotate(-22.4 1275.0 442.7)"/><rect x="1276.7" y="465.9" width="13.4" height="11.4" fill="#e9ebf0" transform="rotate(-22.4 1283.4 471.6)"/><rect x="1291.2" y="498.3" width="11.5" height="8.3" fill="#e9ebf0" transform="rotate(-22.4 1296.9 502.5)"/><rect x="1210.2" y="252.9" width="13.1" height="13.8" fill="#e9ebf0" transform="rotate(-22.4 1216.8 259.9)"/><rect x="1238.2" y="322.1" width="17.3" height="10.8" fill="#e9ebf0" transform="rotate(-22.4 1246.8 327.5)"/><rect x="1239.5" y="335.1" width="20.6" height="10.0" fill="#e9ebf0" transform="rotate(-22.4 1249.8 340.1)"/><rect x="1253.6" y="362.1" width="12.9" height="16.9" fill="#e9ebf0" transform="rotate(-22.4 1260.0 370.6)"/><rect x="1263.6" y="389.1" width="14.9" height="12.7" fill="#e9ebf0" transform="rotate(-22.4 1271.0 395.5)"/><rect x="1270.1" y="403.3" width="18.8" height="14.1" fill="#e9ebf0" transform="rotate(-22.4 1279.5 410.4)"/><rect x="1279.3" y="417.4" width="11.8" height="8.3" fill="#e9ebf0" transform="rotate(-22.4 1285.2 421.6)"/><rect x="1293.8" y="446.6" width="10.1" height="16.1" fill="#e9ebf0" transform="rotate(-22.4 1298.9 454.6)"/><rect x="1296.5" y="459.7" width="13.6" height="16.0" fill="#e9ebf0" transform="rotate(-22.4 1303.3 467.7)"/><rect x="1306.0" y="486.5" width="9.9" height="12.9" fill="#e9ebf0" transform="rotate(-22.4 1311.0 492.9)"/><rect x="1312.1" y="503.7" width="10.0" height="10.7" fill="#e9ebf0" transform="rotate(-22.4 1317.0 509.0)"/><rect x="1228.5" y="256.6" width="16.4" height="13.5" fill="#e9ebf0" transform="rotate(-22.4 1236.6 263.3)"/><rect x="1234.5" y="275.3" width="19.7" height="13.6" fill="#e9ebf0" transform="rotate(-22.4 1244.3 282.0)"/><rect x="1241.2" y="287.1" width="17.5" height="11.4" fill="#e9ebf0" transform="rotate(-22.4 1250.0 292.8)"/><rect x="1247.8" y="301.7" width="16.2" height="11.5" fill="#e9ebf0" transform="rotate(-22.4 1255.9 307.4)"/><rect x="1253.7" y="315.0" width="14.3" height="11.4" fill="#e9ebf0" transform="rotate(-22.4 1260.9 320.7)"/><rect x="1261.7" y="330.1" width="11.3" height="13.8" fill="#e9ebf0" transform="rotate(-22.4 1267.4 337.1)"/><rect x="1265.8" y="345.7" width="13.8" height="8.1" fill="#e9ebf0" transform="rotate(-22.4 1272.7 349.7)"/><rect x="1267.6" y="356.7" width="20.1" height="13.9" fill="#e9ebf0" transform="rotate(-22.4 1277.7 363.7)"/><rect x="1279.7" y="381.8" width="19.6" height="12.4" fill="#e9ebf0" transform="rotate(-22.4 1289.5 388.0)"/><rect x="1285.1" y="399.8" width="20.9" height="9.1" fill="#e9ebf0" transform="rotate(-22.4 1295.6 404.4)"/><rect x="1294.2" y="408.2" width="11.7" height="17.0" fill="#e9ebf0" transform="rotate(-22.4 1300.0 416.7)"/><rect x="1298.5" y="426.9" width="11.7" height="10.3" fill="#e9ebf0" transform="rotate(-22.4 1304.4 432.0)"/><rect x="1308.1" y="441.9" width="13.3" height="9.0" fill="#e9ebf0" transform="rotate(-22.4 1314.7 446.4)"/><rect x="1320.5" y="481.3" width="20.8" height="12.0" fill="#e9ebf0" transform="rotate(-22.4 1330.9 487.2)"/><rect x="1325.9" y="495.2" width="11.9" height="15.9" fill="#e9ebf0" transform="rotate(-22.4 1331.9 503.2)"/><rect x="1332.5" y="506.5" width="18.7" height="14.4" fill="#e9ebf0" transform="rotate(-22.4 1341.9 513.7)"/><rect x="1242.5" y="251.4" width="15.0" height="14.9" fill="#e9ebf0" transform="rotate(-22.4 1250.0 258.9)"/><rect x="1266.8" y="307.9" width="13.0" height="15.8" fill="#e9ebf0" transform="rotate(-22.4 1273.3 315.8)"/><rect x="1281.7" y="337.3" width="15.2" height="12.0" fill="#e9ebf0" transform="rotate(-22.4 1289.3 343.3)"/><rect x="1297.2" y="374.7" width="18.2" height="13.0" fill="#e9ebf0" transform="rotate(-22.4 1306.3 381.2)"/><rect x="1298.5" y="394.6" width="19.4" height="9.6" fill="#e9ebf0" transform="rotate(-22.4 1308.2 399.4)"/><rect x="1321.0" y="435.0" width="13.0" height="9.1" fill="#e9ebf0" transform="rotate(-22.4 1327.5 439.5)"/><rect x="1326.0" y="448.2" width="20.4" height="12.5" fill="#e9ebf0" transform="rotate(-22.4 1336.2 454.5)"/><rect x="1328.1" y="459.6" width="16.0" height="16.9" fill="#e9ebf0" transform="rotate(-22.4 1336.1 468.0)"/><rect x="1333.9" y="473.5" width="20.7" height="9.8" fill="#e9ebf0" transform="rotate(-22.4 1344.3 478.4)"/><rect x="1264.2" y="257.2" width="19.1" height="15.3" fill="#e9ebf0" transform="rotate(-22.4 1273.8 264.8)"/><rect x="1275.6" y="289.8" width="18.7" height="13.6" fill="#e9ebf0" transform="rotate(-22.4 1284.9 296.5)"/><rect x="1289.4" y="317.1" width="12.6" height="11.4" fill="#e9ebf0" transform="rotate(-22.4 1295.7 322.8)"/><rect x="1305.5" y="343.8" width="9.3" height="12.6" fill="#e9ebf0" transform="rotate(-22.4 1310.1 350.1)"/><rect x="1332.8" y="426.4" width="18.1" height="10.6" fill="#e9ebf0" transform="rotate(-22.4 1341.9 431.7)"/><rect x="1281.2" y="257.0" width="18.0" height="9.5" fill="#e9ebf0" transform="rotate(-22.4 1290.2 261.7)"/><rect x="1293.1" y="267.1" width="11.2" height="13.5" fill="#e9ebf0" transform="rotate(-22.4 1298.7 273.8)"/><rect x="1294.4" y="285.3" width="10.3" height="9.3" fill="#e9ebf0" transform="rotate(-22.4 1299.5 289.9)"/><rect x="1314.4" y="323.1" width="9.7" height="8.1" fill="#e9ebf0" transform="rotate(-22.4 1319.3 327.1)"/><rect x="1322.0" y="340.6" width="9.2" height="9.4" fill="#e9ebf0" transform="rotate(-22.4 1326.6 345.3)"/><rect x="1323.6" y="349.0" width="11.3" height="15.3" fill="#e9ebf0" transform="rotate(-22.4 1329.2 356.6)"/><rect x="1327.3" y="364.4" width="16.8" height="9.2" fill="#e9ebf0" transform="rotate(-22.4 1335.8 369.0)"/><rect x="1336.5" y="375.8" width="14.4" height="13.9" fill="#e9ebf0" transform="rotate(-22.4 1343.7 382.7)"/><rect x="1305.1" y="264.6" width="17.0" height="9.0" fill="#e9ebf0" transform="rotate(-22.4 1313.6 269.1)"/><rect x="1323.0" y="305.3" width="11.3" height="10.0" fill="#e9ebf0" transform="rotate(-22.4 1328.6 310.3)"/><rect x="1342.0" y="345.9" width="9.5" height="9.5" fill="#e9ebf0" transform="rotate(-22.4 1346.8 350.6)"/><rect x="1317.3" y="257.0" width="16.0" height="9.0" fill="#e9ebf0" transform="rotate(-22.4 1325.2 261.5)"/><rect x="1329.5" y="282.3" width="20.3" height="10.6" fill="#e9ebf0" transform="rotate(-22.4 1339.6 287.6)"/><rect x="1335.8" y="294.7" width="18.8" height="14.0" fill="#e9ebf0" transform="rotate(-22.4 1345.2 301.7)"/><rect x="614.9" y="272.0" width="30.0" height="12.0" fill="#fbf6e6" transform="rotate(-22.4 629.9 278.0)"/><rect x="571.3" y="292.5" width="10.0" height="25.0" fill="#fbf6e6" transform="rotate(-22.4 576.3 305.0)"/><rect x="527.0" y="334.8" width="18.0" height="16.0" fill="#fbf6e6" transform="rotate(-22.4 536.0 342.8)"/><rect x="518.6" y="377.0" width="40.0" height="20.0" fill="#fbf6e6" transform="rotate(-22.4 538.6 387.0)"/><rect x="471.0" y="381.0" width="20.0" height="20.0" fill="#fbf6e6" transform="rotate(-22.4 481.0 391.0)"/><rect x="415.0" y="304.0" width="18.0" height="6.0" fill="#fbf6e6" transform="rotate(-22.4 424.0 307.0)"/><rect x="583.7" y="358.0" width="12.0" height="18.0" fill="#fbf6e6" transform="rotate(-22.4 589.7 367.0)"/><rect x="692.0" y="326.6" width="14.0" height="8.0" fill="#fbf6e6" transform="rotate(-22.4 699.0 330.6)"/><rect x="742.6" y="292.8" width="20.0" height="22.0" fill="#fbf6e6" transform="rotate(-22.4 752.6 303.8)"/><rect x="710.0" y="348.0" width="26.0" height="28.0" fill="#fbf6e6" transform="rotate(-22.4 723.0 362.0)"/><rect x="762.7" y="333.0" width="14.0" height="14.0" fill="#fbf6e6" transform="rotate(-22.4 769.7 340.0)"/><rect x="791.5" y="319.4" width="15.0" height="20.0" fill="#fbf6e6" transform="rotate(-22.4 799.0 329.4)"/><rect x="818.0" y="309.5" width="18.0" height="30.0" fill="#fbf6e6" transform="rotate(-22.4 827.0 324.5)"/><rect x="878.9" y="275.2" width="25.0" height="45.0" fill="#fbf6e6" transform="rotate(-22.4 891.4 297.7)"/><rect x="870.8" y="335.8" width="12.0" height="14.0" fill="#fbf6e6" transform="rotate(-22.4 876.8 342.8)"/><rect x="910.5" y="343.0" width="18.0" height="12.0" fill="#fbf6e6" transform="rotate(-22.4 919.5 349.0)"/><rect x="992.7" y="321.8" width="24.0" height="20.0" fill="#fbf6e6" transform="rotate(-22.4 1004.7 331.8)"/><rect x="824.0" y="265.0" width="20.0" height="12.0" fill="#fbf6e6" transform="rotate(-22.4 834.0 271.0)"/><rect x="802.0" y="349.0" width="10.0" height="32.0" fill="#fbf6e6" transform="rotate(-22.4 807.0 365.0)"/><rect x="1151.7" y="316.0" width="24.0" height="22.0" fill="#fbf6e6" transform="rotate(-22.4 1163.7 327.0)"/><rect x="1273.0" y="343.0" width="12.0" height="14.0" fill="#fbf6e6" transform="rotate(-22.4 1279.0 350.0)"/><rect x="1322.0" y="317.7" width="14.0" height="16.0" fill="#fbf6e6" transform="rotate(-22.4 1329.0 325.7)"/><rect x="1100.5" y="360.0" width="17.0" height="14.0" fill="#fbf6e6" transform="rotate(-22.4 1109.0 367.0)"/><rect x="1146.0" y="382.0" width="20.0" height="18.0" fill="#fbf6e6" transform="rotate(-22.4 1156.0 391.0)"/><rect x="1300.0" y="306.0" width="24.0" height="12.0" fill="#fbf6e6" transform="rotate(-22.4 1312.0 312.0)"/><rect x="1028.0" y="427.0" width="40.0" height="50.0" fill="#fbf6e6" transform="rotate(-22.4 1048.0 452.0)"/><rect x="1014.0" y="383.0" width="44.0" height="20.0" fill="#fbf6e6" transform="rotate(-22.4 1036.0 393.0)"/><rect x="1149.0" y="384.5" width="22.0" height="27.0" fill="#fbf6e6" transform="rotate(-22.4 1160.0 398.0)"/><rect x="1127.0" y="416.5" width="20.0" height="22.0" fill="#fbf6e6" transform="rotate(-22.4 1137.0 427.5)"/><rect x="1204.5" y="387.0" width="15.0" height="20.0" fill="#fbf6e6" transform="rotate(-22.4 1212.0 397.0)"/><rect x="1244.0" y="416.5" width="10.0" height="22.0" fill="#fbf6e6" transform="rotate(-22.4 1249.0 427.5)"/><rect x="1263.0" y="453.0" width="30.0" height="24.0" fill="#fbf6e6" transform="rotate(-22.4 1278.0 465.0)"/><rect x="1300.0" y="397.0" width="12.0" height="14.0" fill="#fbf6e6" transform="rotate(-22.4 1306.0 404.0)"/><rect x="1312.0" y="421.5" width="12.0" height="12.0" fill="#fbf6e6" transform="rotate(-22.4 1318.0 427.5)"/><rect x="1117.5" y="482.4" width="12.0" height="12.0" fill="#fbf6e6" transform="rotate(-22.4 1123.5 488.4)"/><rect x="1144.0" y="470.1" width="10.0" height="17.0" fill="#fbf6e6" transform="rotate(-22.4 1149.0 478.6)"/><rect x="1066.0" y="387.0" width="20.0" height="12.0" fill="#fbf6e6" transform="rotate(-22.4 1076.0 393.0)"/><rect x="1122.0" y="387.0" width="8.0" height="20.0" fill="#fbf6e6" transform="rotate(-22.4 1126.0 397.0)"/><rect x="749.0" y="380.0" width="12.0" height="10.0" fill="#fbf6e6" transform="rotate(-22.4 755.0 385.0)"/><rect x="783.0" y="385.0" width="12.0" height="12.0" fill="#fbf6e6" transform="rotate(-22.4 789.0 391.0)"/><rect x="814.6" y="380.0" width="10.0" height="10.0" fill="#fbf6e6" transform="rotate(-22.4 819.6 385.0)"/><rect x="934.1" y="399.5" width="17.0" height="17.0" fill="#fbf6e6" transform="rotate(-22.4 942.6 408.0)"/><rect x="963.4" y="389.5" width="12.0" height="17.0" fill="#fbf6e6" transform="rotate(-22.4 969.4 398.0)"/><rect x="844.0" y="439.0" width="12.0" height="12.0" fill="#fbf6e6" transform="rotate(-22.4 850.0 445.0)"/><rect x="856.0" y="434.0" width="12.0" height="12.0" fill="#fbf6e6" transform="rotate(-22.4 862.0 440.0)"/><rect x="766.0" y="499.0" width="17.0" height="12.0" fill="#fbf6e6" transform="rotate(-22.4 774.5 505.0)"/><rect x="834.0" y="504.0" width="8.0" height="8.0" fill="#fbf6e6" transform="rotate(-22.4 838.0 508.0)"/><rect x="470.6" y="387.0" width="36.0" height="32.0" fill="#fbf6e6" transform="rotate(-22.4 488.6 403.0)"/><rect x="540.7" y="421.6" width="20.0" height="24.0" fill="#fbf6e6" transform="rotate(-22.4 550.7 433.6)"/><rect x="602.0" y="399.0" width="34.0" height="30.0" fill="#fbf6e6" transform="rotate(-22.4 619.0 414.0)"/><rect x="570.2" y="428.5" width="17.0" height="17.0" fill="#fbf6e6" transform="rotate(-22.4 578.7 437.0)"/><rect x="648.2" y="438.0" width="17.0" height="8.0" fill="#fbf6e6" transform="rotate(-22.4 656.7 442.0)"/><rect x="390.0" y="433.5" width="10.0" height="27.0" fill="#fbf6e6" transform="rotate(-22.4 395.0 447.0)"/><rect x="587.1" y="494.5" width="15.0" height="12.0" fill="#fbf6e6" transform="rotate(-22.4 594.6 500.5)"/><rect x="648.0" y="489.0" width="12.0" height="8.0" fill="#fbf6e6" transform="rotate(-22.4 654.0 493.0)"/><line x1="505.0" y1="310.0" x2="625.9" y2="259.1" stroke="#cbd8e3" stroke-width="11.0" stroke-linecap="butt"/><path d="M380 357 L392 352.500 L434 336.500 L480 317 L540 292 M380 364 L392 359.500 L434 343 L480 326 L540 299.500" stroke="#cbd8e3" stroke-width="5.6" fill="none" stroke-linejoin="round"/><line x1="378.1" y1="478.8" x2="690.0" y2="350.9" stroke="#cbd8e3" stroke-width="15.3" stroke-linecap="butt"/><line x1="684.0" y1="353.4" x2="916.9" y2="259.6" stroke="#cbd8e3" stroke-width="18.5" stroke-linecap="butt"/><line x1="781.1" y1="442.5" x2="920.1" y2="391.1" stroke="#cbd8e3" stroke-width="4.8" stroke-linecap="butt"/><line x1="920.1" y1="391.1" x2="1204.1" y2="270.9" stroke="#cbd8e3" stroke-width="4.8" stroke-linecap="butt"/><line x1="784.9" y1="451.5" x2="923.9" y2="400.1" stroke="#cbd8e3" stroke-width="4.8" stroke-linecap="butt"/><line x1="923.9" y1="400.1" x2="1207.9" y2="279.9" stroke="#cbd8e3" stroke-width="4.8" stroke-linecap="butt"/><line x1="1204.0" y1="276.5" x2="1245.9" y2="258.6" stroke="#cbd8e3" stroke-width="11.0" stroke-linecap="butt"/><line x1="605.5" y1="515.6" x2="781.3" y2="442.7" stroke="#cbd8e3" stroke-width="4.8" stroke-linecap="butt"/><line x1="609.0" y1="524.1" x2="784.7" y2="451.3" stroke="#cbd8e3" stroke-width="4.8" stroke-linecap="butt"/><line x1="973.7" y1="520.8" x2="1352.8" y2="362.1" stroke="#cbd8e3" stroke-width="15.5" stroke-linecap="butt"/><line x1="392.4" y1="357.0" x2="441.5" y2="483.3" stroke="#cbd8e3" stroke-width="5.0" stroke-linecap="butt"/><line x1="523.4" y1="251.0" x2="584.6" y2="402.0" stroke="#cbd8e3" stroke-width="5.0" stroke-linecap="butt"/><line x1="648.3" y1="251.1" x2="692.0" y2="352.5" stroke="#cbd8e3" stroke-width="5.0" stroke-linecap="butt"/><line x1="692.0" y1="352.5" x2="762.6" y2="528.9" stroke="#cbd8e3" stroke-width="5.0" stroke-linecap="butt"/><line x1="758.5" y1="250.4" x2="775.1" y2="312.3" stroke="#cbd8e3" stroke-width="5.0" stroke-linecap="butt"/><line x1="780.7" y1="321.7" x2="866.0" y2="528.9" stroke="#cbd8e3" stroke-width="5.0" stroke-linecap="butt"/><line x1="863.8" y1="283.8" x2="923.1" y2="400.0" stroke="#cbd8e3" stroke-width="5.0" stroke-linecap="butt"/><line x1="912.1" y1="380.0" x2="987.1" y2="527.4" stroke="#cbd8e3" stroke-width="5.0" stroke-linecap="butt"/><line x1="936.6" y1="251.1" x2="1001.0" y2="400.0" stroke="#cbd8e3" stroke-width="5.0" stroke-linecap="butt"/><line x1="997.4" y1="389.7" x2="1043.2" y2="499.8" stroke="#cbd8e3" stroke-width="5.0" stroke-linecap="butt"/><line x1="1046.3" y1="250.9" x2="1104.0" y2="400.0" stroke="#cbd8e3" stroke-width="8.0" stroke-linecap="butt"/><line x1="1098.0" y1="380.0" x2="1134.4" y2="462.8" stroke="#cbd8e3" stroke-width="8.0" stroke-linecap="butt"/><line x1="1133.0" y1="463.0" x2="1156.4" y2="530.2" stroke="#cbd8e3" stroke-width="5.0" stroke-linecap="butt"/><line x1="1166.4" y1="251.0" x2="1216.0" y2="374.0" stroke="#cbd8e3" stroke-width="6.5" stroke-linecap="butt"/><line x1="1216.0" y1="374.0" x2="1234.3" y2="411.7" stroke="#cbd8e3" stroke-width="6.5" stroke-linecap="butt"/><line x1="1234.3" y1="411.7" x2="1281.2" y2="530.2" stroke="#cbd8e3" stroke-width="5.0" stroke-linecap="butt"/><line x1="1257.4" y1="251.2" x2="1315.8" y2="381.7" stroke="#cbd8e3" stroke-width="5.0" stroke-linecap="butt"/><line x1="1315.8" y1="381.7" x2="1344.5" y2="455.0" stroke="#cbd8e3" stroke-width="5.0" stroke-linecap="butt"/><line x1="1246.4" y1="307.5" x2="1283.0" y2="384.0" stroke="#cbd8e3" stroke-width="3.0" stroke-linecap="butt"/><line x1="558.0" y1="416.5" x2="565.4" y2="445.8" stroke="#cbd8e3" stroke-width="4.0" stroke-linecap="butt"/><line x1="565.4" y1="445.8" x2="580.0" y2="516.0" stroke="#cbd8e3" stroke-width="4.0" stroke-linecap="butt"/><line x1="587.3" y1="406.8" x2="601.9" y2="445.8" stroke="#cbd8e3" stroke-width="4.0" stroke-linecap="butt"/><line x1="601.9" y1="445.8" x2="631.0" y2="516.0" stroke="#cbd8e3" stroke-width="4.0" stroke-linecap="butt"/><line x1="436.0" y1="470.0" x2="456.0" y2="516.0" stroke="#cbd8e3" stroke-width="4.0" stroke-linecap="butt"/><line x1="385.0" y1="521.3" x2="445.0" y2="488.5" stroke="#cbd8e3" stroke-width="5.5" stroke-linecap="butt"/><line x1="689.6" y1="494.4" x2="695.6" y2="518.9" stroke="#cbd8e3" stroke-width="4.0" stroke-linecap="butt"/><line x1="856.0" y1="262.0" x2="859.8" y2="272.0" stroke="#cbd8e3" stroke-width="4.0" stroke-linecap="butt"/><path d="M1133.2 314.8 L1145.4 342.8 M1137 324.500 L1149 322" stroke="#cbd8e3" stroke-width="3.5" fill="none"/><path d="M1291.5 394.600 L1302.5 425 L1315.8 419" stroke="#cbd8e3" stroke-width="3.5" fill="none"/><path d="M900 505 Q902 494 914 490" stroke="#cbd8e3" stroke-width="3" fill="none"/><path d="M398 298 q-4 14 2 28 q6 12 12 8 q4 -4 0 -16 l-8 -24" stroke="#cbd8e3" stroke-width="2.5" fill="none"/><line x1="380.0" y1="478.0" x2="690.0" y2="350.9" stroke="#dfe7ef" stroke-width="1.0" stroke-linecap="butt"/><line x1="690.0" y1="350.9" x2="915.0" y2="260.3" stroke="#dfe7ef" stroke-width="1.0" stroke-linecap="butt"/><line x1="1199.0" y1="427.0" x2="1231.0" y2="413.6" stroke="#f3f5f8" stroke-width="1.8" stroke-linecap="round"/><line x1="1248.0" y1="406.5" x2="1290.0" y2="389.0" stroke="#f3f5f8" stroke-width="1.8" stroke-linecap="round"/><line x1="1060.0" y1="485.0" x2="1092.0" y2="471.6" stroke="#f3f5f8" stroke-width="1.8" stroke-linecap="round"/><line x1="1144.0" y1="450.0" x2="1176.0" y2="436.6" stroke="#f3f5f8" stroke-width="1.8" stroke-linecap="round"/><text transform="translate(502.5 317.2) rotate(-22.1)" dy="0.35em" font-size="10.4" font-weight="bold" fill="#41566b" textLength="120.9" lengthAdjust="spacingAndGlyphs" stroke="#f8f8f9" stroke-width="3.4" paint-order="stroke" stroke-linejoin="round">Av. Visc. de Guarapuava</text><text transform="translate(582.9 392.2) rotate(-21.4)" dy="0.35em" font-size="10.4" font-weight="bold" fill="#41566b" textLength="105.3" lengthAdjust="spacingAndGlyphs" stroke="#f8f8f9" stroke-width="3.4" paint-order="stroke" stroke-linejoin="round">Av. Sete de Setembro</text><text transform="translate(562.4 414.8) rotate(-22.9)" dy="0.35em" font-size="10.4" font-weight="bold" fill="#41566b" textLength="105.0" lengthAdjust="spacingAndGlyphs" stroke="#f8f8f9" stroke-width="3.4" paint-order="stroke" stroke-linejoin="round">Av. Sete de Setembro</text><text transform="translate(421.2 475.7) rotate(-22.9)" dy="0.35em" font-size="10.4" font-weight="bold" fill="#41566b" textLength="107.1" lengthAdjust="spacingAndGlyphs" stroke="#f8f8f9" stroke-width="3.4" paint-order="stroke" stroke-linejoin="round">Av. Sete de Setembro</text><text transform="translate(747.7 334.3) rotate(-21.6)" dy="0.35em" font-size="10.4" font-weight="bold" fill="#41566b" textLength="106.1" lengthAdjust="spacingAndGlyphs" stroke="#f8f8f9" stroke-width="3.4" paint-order="stroke" stroke-linejoin="round">Av. Sete de Setembro</text><text transform="translate(698.0 370.0) rotate(69.6)" dy="0.35em" font-size="10.4" font-weight="bold" fill="#41566b" textLength="73.1" lengthAdjust="spacingAndGlyphs" stroke="#f8f8f9" stroke-width="3.4" paint-order="stroke" stroke-linejoin="round">R. Cel. Dulcídio</text><text transform="translate(757.5 263.7) rotate(73.2)" dy="0.35em" font-size="10.4" font-weight="bold" fill="#41566b" textLength="36.3" lengthAdjust="spacingAndGlyphs" stroke="#f8f8f9" stroke-width="3.4" paint-order="stroke" stroke-linejoin="round">Pasteur</text><text transform="translate(870.7 296.5) rotate(64.3)" dy="0.35em" font-size="10.4" font-weight="bold" fill="#41566b" textLength="78.5" lengthAdjust="spacingAndGlyphs" stroke="#f8f8f9" stroke-width="3.4" paint-order="stroke" stroke-linejoin="round">R. Buenos Aires</text><text transform="translate(945.0 267.3) rotate(67.8)" dy="0.35em" font-size="10.4" font-weight="bold" fill="#41566b" textLength="135.4" lengthAdjust="spacingAndGlyphs" stroke="#f8f8f9" stroke-width="3.4" paint-order="stroke" stroke-linejoin="round">Rua Desembargador Motta</text><text transform="translate(1048.7 263.7) rotate(67.3)" dy="0.35em" font-size="10.4" font-weight="bold" fill="#41566b" textLength="29.8" lengthAdjust="spacingAndGlyphs" stroke="#f8f8f9" stroke-width="3.4" paint-order="stroke" stroke-linejoin="round">ranco</text><text transform="translate(1088.2 320.9) rotate(-22.3)" dy="0.35em" font-size="10.4" font-weight="bold" fill="#41566b" textLength="80.2" lengthAdjust="spacingAndGlyphs" stroke="#f8f8f9" stroke-width="3.4" paint-order="stroke" stroke-linejoin="round">Av. Silva Jardim</text><text transform="translate(1268.4 278.3) rotate(65.2)" dy="0.35em" font-size="10.4" font-weight="bold" fill="#41566b" textLength="92.6" lengthAdjust="spacingAndGlyphs" stroke="#f8f8f9" stroke-width="3.4" paint-order="stroke" stroke-linejoin="round">R. Nunes Machado</text><text transform="translate(1318.3 395.8) rotate(64.7)" dy="0.35em" font-size="10.4" font-weight="bold" fill="#41566b" textLength="55.5" lengthAdjust="spacingAndGlyphs" stroke="#f8f8f9" stroke-width="3.4" paint-order="stroke" stroke-linejoin="round">R. Nunes M.</text><text transform="translate(560.5 427.5) rotate(76.2)" dy="0.35em" font-size="10.4" font-weight="bold" fill="#41566b" textLength="25.2" lengthAdjust="spacingAndGlyphs" stroke="#f8f8f9" stroke-width="3.4" paint-order="stroke" stroke-linejoin="round">Trav.</text><text transform="translate(589.7 415.3) rotate(67.9)" dy="0.35em" font-size="10.4" font-weight="bold" fill="#41566b" textLength="35.3" lengthAdjust="spacingAndGlyphs" stroke="#f8f8f9" stroke-width="3.4" paint-order="stroke" stroke-linejoin="round">R. Alfe</text><text transform="translate(445.6 491.5) rotate(69.7)" dy="0.35em" font-size="11.0" font-weight="bold" fill="#41566b" textLength="28.8" lengthAdjust="spacingAndGlyphs" stroke="#f8f8f9" stroke-width="3.4" paint-order="stroke" stroke-linejoin="round">Bento</text><text transform="translate(571.0 488.0) rotate(76.0)" dy="0.35em" font-size="10.4" font-weight="bold" fill="#41566b" textLength="24.7" lengthAdjust="spacingAndGlyphs" stroke="#f8f8f9" stroke-width="3.4" paint-order="stroke" stroke-linejoin="round">o Tu</text><text transform="translate(622.6 492.0) rotate(72.1)" dy="0.35em" font-size="10.4" font-weight="bold" fill="#41566b" textLength="27.3" lengthAdjust="spacingAndGlyphs" stroke="#f8f8f9" stroke-width="3.4" paint-order="stroke" stroke-linejoin="round">o San</text><text transform="translate(811.0 445.3) rotate(-20.6)" dy="0.35em" font-size="10.4" font-weight="bold" fill="#41566b" textLength="61.2" lengthAdjust="spacingAndGlyphs" stroke="#f8f8f9" stroke-width="3.4" paint-order="stroke" stroke-linejoin="round">Silva Jardim</text><text transform="translate(926.8 411.7) rotate(62.2)" dy="0.35em" font-size="10.4" font-weight="bold" fill="#41566b" textLength="78.3" lengthAdjust="spacingAndGlyphs" stroke="#f8f8f9" stroke-width="3.4" paint-order="stroke" stroke-linejoin="round">R. Buenos Aires</text><text transform="translate(982.8 512.7) rotate(-21.5)" dy="0.35em" font-size="10.4" font-weight="bold" fill="#41566b" textLength="49.7" lengthAdjust="spacingAndGlyphs" stroke="#f8f8f9" stroke-width="3.4" paint-order="stroke" stroke-linejoin="round">Av. Iguaçu</text><text transform="translate(746.5 492.0) rotate(68.0)" dy="0.35em" font-size="10.4" font-weight="bold" fill="#41566b" textLength="28.0" lengthAdjust="spacingAndGlyphs" stroke="#f8f8f9" stroke-width="3.4" paint-order="stroke" stroke-linejoin="round">R. Cel</text><text transform="translate(1139.3 449.4) rotate(-23.5)" dy="0.35em" font-size="10.4" font-weight="bold" fill="#41566b" textLength="51.8" lengthAdjust="spacingAndGlyphs" stroke="#f8f8f9" stroke-width="3.4" paint-order="stroke" stroke-linejoin="round">Av. Iguaçu</text><text transform="translate(1043.1 500.5) rotate(-23.5)" dy="0.35em" font-size="10.4" font-weight="bold" fill="#41566b" textLength="51.8" lengthAdjust="spacingAndGlyphs" stroke="#f8f8f9" stroke-width="3.4" paint-order="stroke" stroke-linejoin="round">Av. Iguaçu</text><text transform="translate(1136.9 472.5) rotate(71.7)" dy="0.35em" font-size="10.4" font-weight="bold" fill="#41566b" textLength="35.3" lengthAdjust="spacingAndGlyphs" stroke="#f8f8f9" stroke-width="3.4" paint-order="stroke" stroke-linejoin="round">R. Brg.</text><text transform="translate(1240.4 429.9) rotate(65.8)" dy="0.35em" font-size="10.4" font-weight="bold" fill="#41566b" textLength="80.1" lengthAdjust="spacingAndGlyphs" stroke="#f8f8f9" stroke-width="3.4" paint-order="stroke" stroke-linejoin="round">R. Lamenha Lins</text><text transform="translate(692.0 507.0) rotate(74.1)" dy="0.35em" font-size="10.4" font-weight="bold" fill="#41566b" textLength="7.3" lengthAdjust="spacingAndGlyphs" stroke="#f8f8f9" stroke-width="3.4" paint-order="stroke" stroke-linejoin="round">R</text><text x="393.2" y="272.4" font-size="11.2" fill="#5f7d97" textLength="90.5" lengthAdjust="spacingAndGlyphs">Batista de Curitiba</text><text x="1152.2" y="344.2" font-size="10.8" fill="#e24a5b" stroke="#f6f7f8" stroke-width="2" paint-order="stroke" textLength="91.3" lengthAdjust="spacingAndGlyphs">Hospital Sugisawa</text><path d="M1255.800 351.400 l-4.800 -5.300 a9.300 9.300 0 1 1 9.600 0 z" fill="#fff"/><circle cx="1255.8" cy="338" r="8.1" fill="#ea4454"/><text x="1255.800" y="341.9" font-size="10.5" font-weight="bold" fill="#fff" text-anchor="middle">H</text><text x="409" y="415.8" font-size="10.8" fill="#2f9e74" stroke="#f6f7f8" stroke-width="2" paint-order="stroke" textLength="61" lengthAdjust="spacingAndGlyphs">BlueFit Batel</text><path d="M482.300 423 l-4.800 -4.200 a9.400 9.400 0 1 1 9.600 0 z" fill="#fff"/><circle cx="482.3" cy="411" r="8.2" fill="#1fa573"/><circle cx="482.3" cy="411" r="2.8" fill="#fff"/><g transform="translate(547.5 327.4)"><rect x="-6.200" y="-6.200" width="12.4" height="12.4" rx="5.2" fill="#fff" opacity="0.85"/><rect x="-5.400" y="-5.400" width="10.8" height="10.8" rx="4.4" fill="#44556c"/><rect x="-3" y="-3.400" width="6" height="6.4" rx="1.1" fill="#fff"/><rect x="-1.800" y="-2.300" width="3.6" height="0.9" fill="#44556c"/><path d="M-3 3 L-3 2.200 L0 0.300 L3 2.200 L3 3 Z" fill="#44556c" opacity="0.55"/></g><g transform="translate(730.0 339.6)"><rect x="-6.200" y="-6.200" width="12.4" height="12.4" rx="5.2" fill="#fff" opacity="0.85"/><rect x="-5.400" y="-5.400" width="10.8" height="10.8" rx="4.4" fill="#44556c"/><rect x="-3" y="-3.400" width="6" height="6.4" rx="1.1" fill="#fff"/><rect x="-1.800" y="-2.300" width="3.6" height="0.9" fill="#44556c"/><path d="M-3 3 L-3 2.200 L0 0.300 L3 2.200 L3 3 Z" fill="#44556c" opacity="0.55"/></g><g transform="translate(1038.3 357.4)"><rect x="-6.200" y="-6.200" width="12.4" height="12.4" rx="5.2" fill="#fff" opacity="0.85"/><rect x="-5.400" y="-5.400" width="10.8" height="10.8" rx="4.4" fill="#44556c"/><rect x="-3" y="-3.400" width="6" height="6.4" rx="1.1" fill="#fff"/><rect x="-1.800" y="-2.300" width="3.6" height="0.9" fill="#44556c"/><path d="M-3 3 L-3 2.200 L0 0.300 L3 2.200 L3 3 Z" fill="#44556c" opacity="0.55"/></g><g transform="translate(1325.6 366.4)"><rect x="-6.200" y="-6.200" width="12.4" height="12.4" rx="5.2" fill="#fff" opacity="0.85"/><rect x="-5.400" y="-5.400" width="10.8" height="10.8" rx="4.4" fill="#44556c"/><rect x="-3" y="-3.400" width="6" height="6.4" rx="1.1" fill="#fff"/><rect x="-1.800" y="-2.300" width="3.6" height="0.9" fill="#44556c"/><path d="M-3 3 L-3 2.200 L0 0.300 L3 2.200 L3 3 Z" fill="#44556c" opacity="0.55"/></g><g transform="translate(1099.1 462.8)"><rect x="-6.200" y="-6.200" width="12.4" height="12.4" rx="5.2" fill="#fff" opacity="0.85"/><rect x="-5.400" y="-5.400" width="10.8" height="10.8" rx="4.4" fill="#44556c"/><rect x="-3" y="-3.400" width="6" height="6.4" rx="1.1" fill="#fff"/><rect x="-1.800" y="-2.300" width="3.6" height="0.9" fill="#44556c"/><path d="M-3 3 L-3 2.200 L0 0.300 L3 2.200 L3 3 Z" fill="#44556c" opacity="0.55"/></g><path transform="translate(476.0 316.5) rotate(157.6)" d="M-3.600 -0.700 H0.200 V-2.400 L3.900 0 L0.200 2.400 V0.700 H-3.600 Z" fill="#7c8995"/><path transform="translate(479.0 325.5) rotate(157.6)" d="M-3.600 -0.700 H0.200 V-2.400 L3.900 0 L0.200 2.400 V0.700 H-3.600 Z" fill="#7c8995"/><path transform="translate(561.5 346.0) rotate(67.6)" d="M-3.600 -0.700 H0.200 V-2.400 L3.900 0 L0.200 2.400 V0.700 H-3.600 Z" fill="#7c8995"/><path transform="translate(667.0 300.0) rotate(-112.4)" d="M-3.600 -0.700 H0.200 V-2.400 L3.900 0 L0.200 2.400 V0.700 H-3.600 Z" fill="#7c8995"/><path transform="translate(851.0 277.5) rotate(157.6)" d="M-3.600 -0.700 H0.200 V-2.400 L3.900 0 L0.200 2.400 V0.700 H-3.600 Z" fill="#7c8995"/><path transform="translate(855.0 288.0) rotate(-22.4)" d="M-3.600 -0.700 H0.200 V-2.400 L3.900 0 L0.200 2.400 V0.700 H-3.600 Z" fill="#7c8995"/><path transform="translate(542.0 409.0) rotate(157.6)" d="M-3.600 -0.700 H0.200 V-2.400 L3.900 0 L0.200 2.400 V0.700 H-3.600 Z" fill="#7c8995"/><path transform="translate(529.0 427.0) rotate(-22.4)" d="M-3.600 -0.700 H0.200 V-2.400 L3.900 0 L0.200 2.400 V0.700 H-3.600 Z" fill="#7c8995"/><path transform="translate(950.0 377.0) rotate(-22.4)" d="M-3.600 -0.700 H0.200 V-2.400 L3.900 0 L0.200 2.400 V0.700 H-3.600 Z" fill="#7c8995"/><path transform="translate(956.0 386.0) rotate(-22.4)" d="M-3.600 -0.700 H0.200 V-2.400 L3.900 0 L0.200 2.400 V0.700 H-3.600 Z" fill="#7c8995"/><path transform="translate(1013.0 350.0) rotate(-22.4)" d="M-3.600 -0.700 H0.200 V-2.400 L3.900 0 L0.200 2.400 V0.700 H-3.600 Z" fill="#7c8995"/><path transform="translate(1016.0 361.0) rotate(-22.4)" d="M-3.600 -0.700 H0.200 V-2.400 L3.900 0 L0.200 2.400 V0.700 H-3.600 Z" fill="#7c8995"/><path transform="translate(1060.0 331.0) rotate(-22.4)" d="M-3.600 -0.700 H0.200 V-2.400 L3.900 0 L0.200 2.400 V0.700 H-3.600 Z" fill="#7c8995"/><path transform="translate(1057.0 343.0) rotate(-22.4)" d="M-3.600 -0.700 H0.200 V-2.400 L3.900 0 L0.200 2.400 V0.700 H-3.600 Z" fill="#7c8995"/><path transform="translate(1200.0 272.0) rotate(-22.4)" d="M-3.600 -0.700 H0.200 V-2.400 L3.900 0 L0.200 2.400 V0.700 H-3.600 Z" fill="#7c8995"/><path transform="translate(1198.0 284.0) rotate(-22.4)" d="M-3.600 -0.700 H0.200 V-2.400 L3.900 0 L0.200 2.400 V0.700 H-3.600 Z" fill="#7c8995"/><path transform="translate(1180.0 285.0) rotate(67.6)" d="M-3.600 -0.700 H0.200 V-2.400 L3.900 0 L0.200 2.400 V0.700 H-3.600 Z" fill="#7c8995"/><path transform="translate(1194.0 321.0) rotate(67.6)" d="M-3.600 -0.700 H0.200 V-2.400 L3.900 0 L0.200 2.400 V0.700 H-3.600 Z" fill="#7c8995"/><path transform="translate(1104.0 393.0) rotate(-112.4)" d="M-3.600 -0.700 H0.200 V-2.400 L3.900 0 L0.200 2.400 V0.700 H-3.600 Z" fill="#7c8995"/><path transform="translate(1121.0 434.0) rotate(-112.4)" d="M-3.600 -0.700 H0.200 V-2.400 L3.900 0 L0.200 2.400 V0.700 H-3.600 Z" fill="#7c8995"/><path transform="translate(1229.0 397.0) rotate(67.6)" d="M-3.600 -0.700 H0.200 V-2.400 L3.900 0 L0.200 2.400 V0.700 H-3.600 Z" fill="#7c8995"/><path transform="translate(1241.0 406.0) rotate(157.6)" d="M-3.600 -0.700 H0.200 V-2.400 L3.900 0 L0.200 2.400 V0.700 H-3.600 Z" fill="#7c8995"/><path transform="translate(1286.0 395.0) rotate(157.6)" d="M-3.600 -0.700 H0.200 V-2.400 L3.900 0 L0.200 2.400 V0.700 H-3.600 Z" fill="#7c8995"/><path transform="translate(851.0 419.5) rotate(-22.4)" d="M-3.600 -0.700 H0.200 V-2.400 L3.900 0 L0.200 2.400 V0.700 H-3.600 Z" fill="#7c8995"/><path transform="translate(897.0 400.0) rotate(-22.4)" d="M-3.600 -0.700 H0.200 V-2.400 L3.900 0 L0.200 2.400 V0.700 H-3.600 Z" fill="#7c8995"/><path transform="translate(907.0 404.5) rotate(-22.4)" d="M-3.600 -0.700 H0.200 V-2.400 L3.900 0 L0.200 2.400 V0.700 H-3.600 Z" fill="#7c8995"/><path transform="translate(957.0 385.5) rotate(-22.4)" d="M-3.600 -0.700 H0.200 V-2.400 L3.900 0 L0.200 2.400 V0.700 H-3.600 Z" fill="#7c8995"/><path transform="translate(1014.0 431.0) rotate(67.6)" d="M-3.600 -0.700 H0.200 V-2.400 L3.900 0 L0.200 2.400 V0.700 H-3.600 Z" fill="#7c8995"/><path transform="translate(852.0 500.0) rotate(-112.4)" d="M-3.600 -0.700 H0.200 V-2.400 L3.900 0 L0.200 2.400 V0.700 H-3.600 Z" fill="#7c8995"/><path transform="translate(670.0 493.0) rotate(-22.4)" d="M-3.600 -0.700 H0.200 V-2.400 L3.900 0 L0.200 2.400 V0.700 H-3.600 Z" fill="#7c8995"/><path transform="translate(661.0 506.0) rotate(-22.4)" d="M-3.600 -0.700 H0.200 V-2.400 L3.900 0 L0.200 2.400 V0.700 H-3.600 Z" fill="#7c8995"/><path transform="translate(1348.0 396.0) rotate(0.0)" d="M-3.600 -0.700 H0.200 V-2.400 L3.900 0 L0.200 2.400 V0.700 H-3.600 Z" fill="#7c8995"/></svg><div class="abs" style="left:8px;top:8px;width:138px;height:32px;background:#fff;border-radius:2px;box-shadow:0 1px 3px -1px rgba(0,0,0,.3)"></div><div class="abs" style="left:70.5px;top:8px;width:1px;height:32px;background:#ececec"></div><span class="abs t" style="left:21.24px;top:17.07px;font-size:13.5px;line-height:13.5px;font-weight:bold;color:#111;letter-spacing:0.421px;">Mapa</span><span class="abs t" style="left:84.49px;top:17.07px;font-size:13.5px;line-height:13.5px;color:#565656;letter-spacing:0.490px;">Satélite</span><div class="abs" style="left:906px;top:8px;width:32px;height:32px;background:#fff;border-radius:2px;box-shadow:0 1px 3px -1px rgba(0,0,0,.3)"></div><svg class="abs" style="left:906px;top:8px" width="32" height="32" viewBox="0 0 32 32"><path d="M9.700 14 V9.700 H14.500 M18.500 9.700 H23 V14 M23 18 V22.300 H18.500 M14.500 22.300 H9.700 V18" stroke="#666" stroke-width="2" fill="none"/></svg><div class="abs" style="left:906px;top:200px;width:32px;height:32px;background:#fff;border-radius:50%;box-shadow:0 1px 3px -1px rgba(0,0,0,.3)"></div><svg class="abs" style="left:906px;top:200px" width="32" height="32" viewBox="0 0 32 32"><path d="M13.200 10.200 L16.400 7.300 L19.600 10.200 M13.200 21.200 L16.400 24.100 L19.600 21.200 M10.300 12.900 L7.400 15.800 L10.300 18.700 M22.400 12.900 L25.300 15.800 L22.400 18.700" stroke="#666" stroke-width="1.7" fill="none"/></svg><div class="abs" style="left:8px;top:183px;width:420px;height:44px;background:#fff"></div><div class="abs" style="left:15px;top:187px;width:367px;height:32px;box-sizing:border-box;border:1px solid #8c9dab;background:#fff"></div><span class="abs t" style="left:24.40px;top:198.46px;font-size:10.8px;line-height:10.8px;color:#444;letter-spacing:0.448px;">Buscar endereço...</span><svg class="abs" style="left:392px;top:193px" width="20" height="20" viewBox="0 0 20 20"><circle cx="7.500" cy="8" r="4.6" fill="none" stroke="#0b4a3c" stroke-width="1.5"/><path d="M10.900 11.500 L15.200 15.600" stroke="#0b4a3c" stroke-width="1.6" stroke-linecap="round"/></svg><span class="abs t" style="left:8.2px;top:232.0px;font-size:14.600px;line-height:15px;letter-spacing:-0.4px;-webkit-text-stroke:0.45px currentColor"><span style="color:#4285f4;-webkit-text-stroke-color:#4285f4">G</span><span style="color:#ea4335">o</span><span style="color:#fbbc05">o</span><span style="color:#4285f4">g</span><span style="color:#34a853">l</span><span style="color:#ea4335">e</span></span><div class="abs" style="left:605px;top:239.5px;width:72px;height:11.5px;background:rgba(246,247,248,.75)"></div><div class="abs" style="left:679px;top:239.5px;width:266px;height:11.5px;background:rgba(246,247,248,.75)"></div><span class="abs t" style="left:607.42px;top:241.83px;font-size:8px;line-height:8px;color:#111;letter-spacing:0.057px;">Atalhos do teclado</span><span class="abs t" style="left:683.72px;top:242.23px;font-size:8px;line-height:8px;color:#333;letter-spacing:0.157px;">Dados cartográficos ©2025 Google</span><span class="abs t" style="left:823.42px;top:242.23px;font-size:8px;line-height:8px;color:#4b6b7d;letter-spacing:0.483px;">Termos</span><span class="abs t" style="left:861.02px;top:241.83px;font-size:8px;line-height:8px;color:#2f5268;letter-spacing:0.032px;">Informar erro no mapa</span></div>
<div class="abs" style="left:907px;top:528px;width:213px;height:32px;border-radius:16px;box-sizing:border-box;border:1px solid #f4574b;background:#fff"></div>
<svg class="abs" style="left:977px;top:536px" width="16" height="16" viewBox="0 0 16 16"><path d="M2.6 2.400 L13.600 12.600 M13.600 2.400 L2.600 12.600" stroke="#f4574b" stroke-width="1.6" fill="none" stroke-linecap="round"/></svg>
<span class="abs t" style="left:997.68px;top:537.52px;font-size:11.2px;line-height:11.2px;font-weight:bold;color:#f4574b;letter-spacing:0.172px;">Remover</span>
<div class="abs" style="left:1128px;top:528px;width:213px;height:32px;border-radius:16px;background:#02ad20"></div>
<svg class="abs" style="left:1207px;top:536px" width="18" height="16" viewBox="0 0 18 16"><path d="M2.6 7.800 L6.300 11.400 L14.400 3.400" stroke="#fff" stroke-width="1.7" fill="none" stroke-linecap="round" stroke-linejoin="round"/></svg>
<span class="abs t" style="left:1226.63px;top:538.42px;font-size:11.2px;line-height:11.2px;font-weight:bold;color:#fff;letter-spacing:0.139px;">Salvar</span>
<div class="abs" style="left:353px;top:566px;width:986px;height:9px;background:#000"></div>
<div class="abs" style="left:0;top:566px;width:1px;height:9px;background:#000"></div>
</body></html>
